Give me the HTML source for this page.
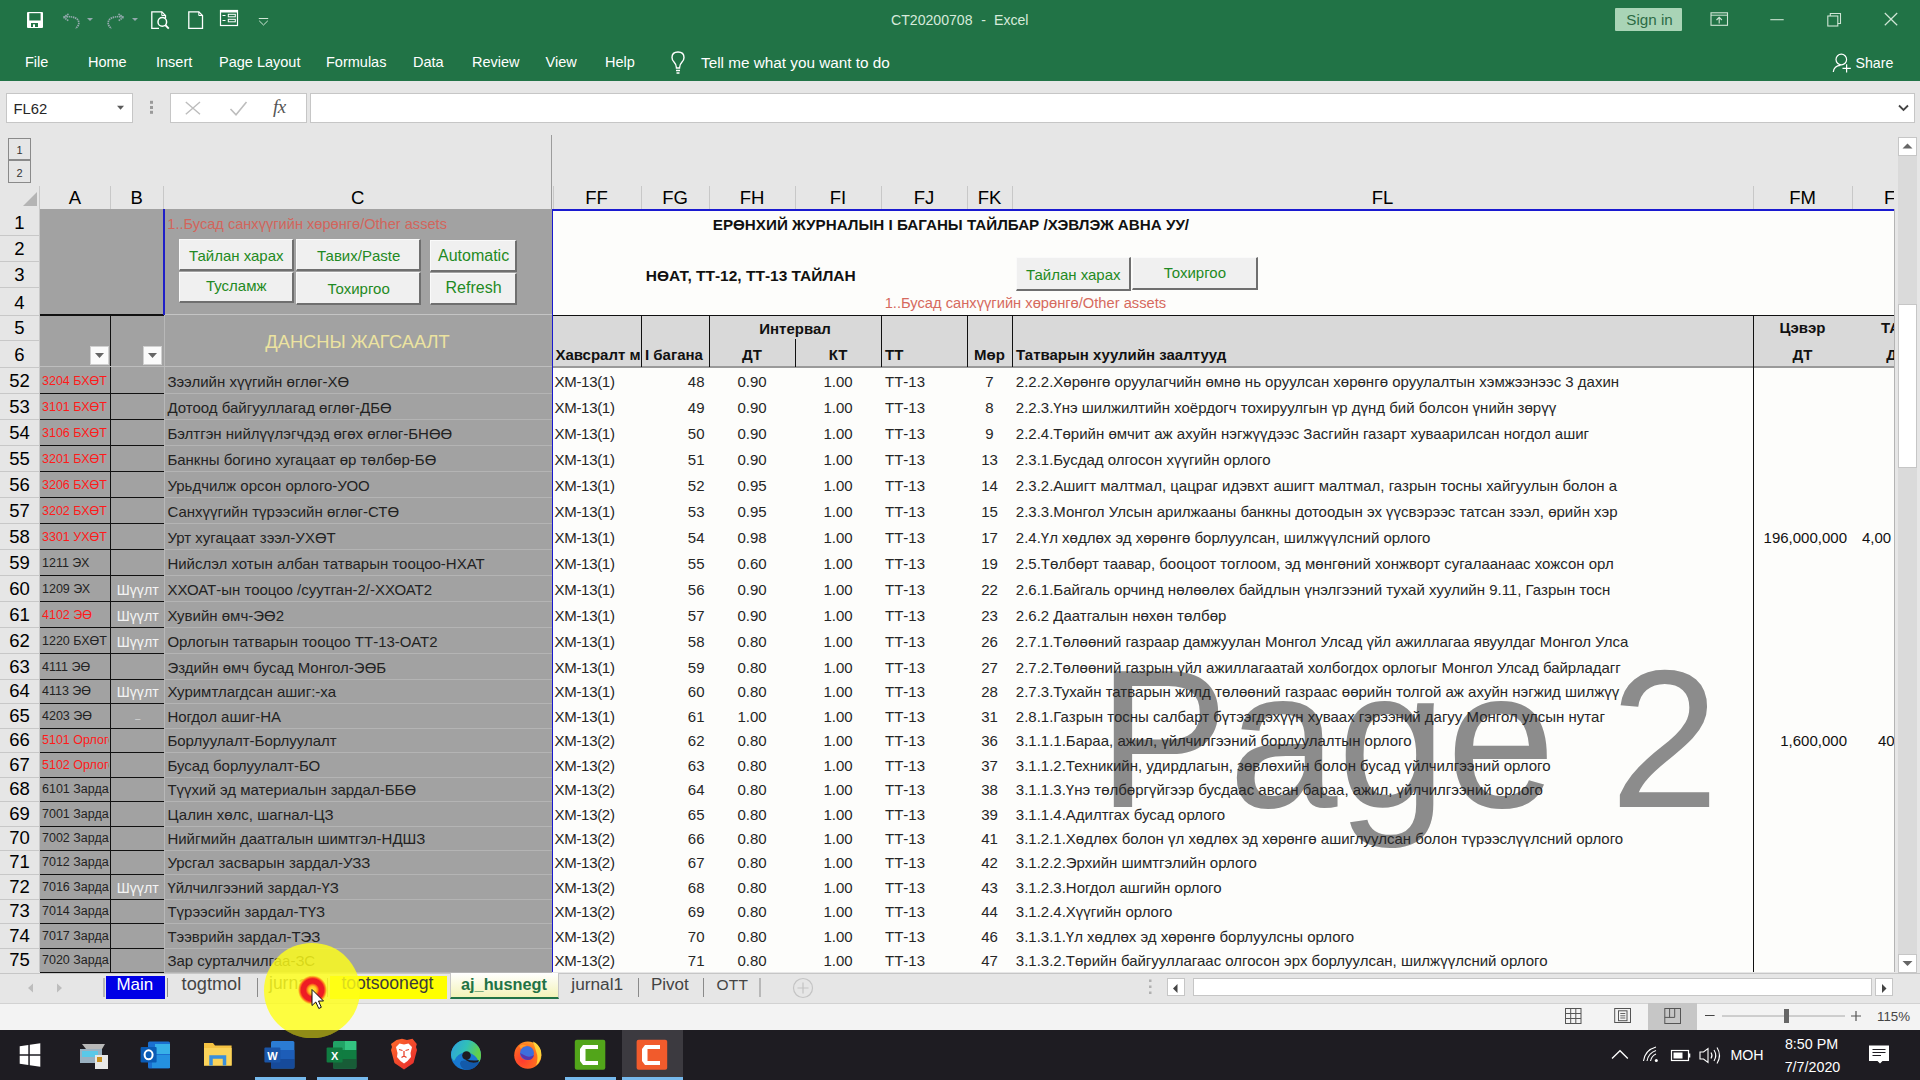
<!DOCTYPE html><html><head><meta charset="utf-8"><style>
html,body{margin:0;padding:0;width:1920px;height:1080px;overflow:hidden;background:#e6e6e6;font-family:"Liberation Sans",sans-serif;}
body{position:relative;}
div{box-sizing:border-box;}
svg{position:absolute;overflow:visible;}
</style></head><body>
<div style="position:absolute;left:0.00px;top:0.00px;width:1920.00px;height:81.00px;background:#217346"></div>
<svg style="left:0;top:0" width="300" height="40"><rect x="27" y="12" width="16" height="16" rx="1" fill="#fff"/><rect x="29.3" y="13.2" width="11.3" height="7.3" fill="#217346"/><rect x="31" y="23" width="7" height="4" fill="#217346"/><rect x="33" y="24.3" width="2" height="2.7" fill="#fff"/><path d="M63.5 17.2 L69 13.8 M63.5 17.2 L68.8 21 M64 17.2 Q73 15.5 77.5 19.5 Q81 24 75.5 28.5" stroke="#93a9ad" stroke-width="1.7" fill="none" stroke-dasharray="1.5 0.7"/><polygon points="87,18 93,18 90,21" fill="#93a9ad"/><path d="M123.5 17.2 L118 13.8 M123.5 17.2 L118.2 21 M123 17.2 Q114 15.5 109.5 19.5 Q106 24 111.5 28.5" stroke="#93a9ad" stroke-width="1.7" fill="none" stroke-dasharray="1.5 0.7"/><polygon points="132,18 138,18 135,21" fill="#93a9ad"/><path d="M159 28.3 L151.8 28.3 L151.8 11.8 L161.8 11.8 L165.5 15.5 L165.5 18" stroke="#fff" stroke-width="1.3" fill="none"/><path d="M161.8 11.8 L161.8 15.5 L165.5 15.5" stroke="#fff" stroke-width="1" fill="none"/><circle cx="162.3" cy="21.9" r="4.3" stroke="#fff" stroke-width="1.5" fill="none"/><path d="M165.3 25 L168.8 28.6" stroke="#fff" stroke-width="1.8"/><path d="M188.8 11.8 L198.8 11.8 L202.5 15.5 L202.5 28.3 L188.8 28.3 Z" stroke="#fff" stroke-width="1.3" fill="none"/><path d="M198.8 11.8 L198.8 15.5 L202.5 15.5" stroke="#fff" stroke-width="1" fill="none"/><rect x="220.5" y="10.5" width="17" height="15" stroke="#fff" stroke-width="1.2" fill="none"/><rect x="220.5" y="10.2" width="17" height="2.3" fill="#fff"/><path d="M222.5 15.5 L225.5 15.5 M222.5 20.5 L225.5 20.5" stroke="#fff" stroke-width="1"/><rect x="228.3" y="14.3" width="7" height="2.5" stroke="#fff" stroke-width="1" fill="none"/><rect x="228.3" y="19.3" width="7" height="2.5" stroke="#fff" stroke-width="1" fill="none"/><path d="M258.8 18.5 L268.2 18.5" stroke="#d0e6d6" stroke-width="1"/><path d="M259.2 20.8 L263.5 25 L267.8 20.8" stroke="#d0e6d6" stroke-width="1" fill="none"/></svg>
<div style="position:absolute;left:891.00px;top:13.06px;font-size:14.1px;line-height:14.1px;color:#d6eadb;font-weight:normal;white-space:nowrap;">CT20200708</div>
<div style="position:absolute;left:981.30px;top:13.06px;font-size:14.1px;line-height:14.1px;color:#d6eadb;font-weight:normal;white-space:nowrap;">-</div>
<div style="position:absolute;left:994.00px;top:13.06px;font-size:14.1px;line-height:14.1px;color:#d6eadb;font-weight:normal;white-space:nowrap;">Excel</div>
<div style="position:absolute;left:25.00px;top:55.23px;font-size:14.5px;line-height:14.5px;color:#ffffff;font-weight:normal;white-space:nowrap;">File</div>
<div style="position:absolute;left:88.00px;top:55.23px;font-size:14.5px;line-height:14.5px;color:#ffffff;font-weight:normal;white-space:nowrap;">Home</div>
<div style="position:absolute;left:156.00px;top:55.23px;font-size:14.5px;line-height:14.5px;color:#ffffff;font-weight:normal;white-space:nowrap;">Insert</div>
<div style="position:absolute;left:219.00px;top:55.23px;font-size:14.5px;line-height:14.5px;color:#ffffff;font-weight:normal;white-space:nowrap;">Page Layout</div>
<div style="position:absolute;left:326.00px;top:55.23px;font-size:14.5px;line-height:14.5px;color:#ffffff;font-weight:normal;white-space:nowrap;">Formulas</div>
<div style="position:absolute;left:413.00px;top:55.23px;font-size:14.5px;line-height:14.5px;color:#ffffff;font-weight:normal;white-space:nowrap;">Data</div>
<div style="position:absolute;left:472.00px;top:55.23px;font-size:14.5px;line-height:14.5px;color:#ffffff;font-weight:normal;white-space:nowrap;">Review</div>
<div style="position:absolute;left:545.50px;top:55.23px;font-size:14.5px;line-height:14.5px;color:#ffffff;font-weight:normal;white-space:nowrap;">View</div>
<div style="position:absolute;left:605.00px;top:55.23px;font-size:14.5px;line-height:14.5px;color:#ffffff;font-weight:normal;white-space:nowrap;">Help</div>
<div style="position:absolute;left:701.00px;top:54.55px;font-size:15.3px;line-height:15.3px;color:#ffffff;font-weight:normal;white-space:nowrap;">Tell me what you want to do</div>
<svg style="left:662px;top:48px" width="30" height="30"><path d="M14.5 20 Q14.5 16.5 12 14 Q10 12 10 9.5 Q10 4 16 4 Q22 4 22 9.5 Q22 12 20 14 Q17.5 16.5 17.5 20 Z" stroke="#fff" stroke-width="1.4" fill="none"/><path d="M14 22.5 L18 22.5 M14.5 25 L17.5 25" stroke="#fff" stroke-width="1.3"/></svg>
<div style="position:absolute;left:1615.00px;top:8.00px;width:67.00px;height:23.00px;background:#a9d4b6;border-radius:1px"></div>
<div style="position:absolute;left:1626.30px;top:11.83px;font-size:15.2px;line-height:15.2px;color:#2c6b45;font-weight:normal;white-space:nowrap;">Sign in</div>
<svg style="left:1700px;top:0" width="220" height="80"><rect x="11" y="12.8" width="16.5" height="12.5" stroke="#cfe5d5" stroke-width="1.1" fill="none"/><path d="M11 15.2 L27.5 15.2" stroke="#cfe5d5" stroke-width="1"/><path d="M19.2 23.5 L19.2 17.5 M16.5 20 L19.2 17.3 L21.9 20" stroke="#cfe5d5" stroke-width="1.1" fill="none"/><path d="M70.3 19.7 L83.7 19.7" stroke="#cfe5d5" stroke-width="1.1"/><rect x="127.8" y="16" width="10" height="10" stroke="#cfe5d5" stroke-width="1.1" fill="none"/><path d="M130.3 16 L130.3 13.5 L140.5 13.5 L140.5 23.5 L137.8 23.5" stroke="#cfe5d5" stroke-width="1.1" fill="none"/><path d="M184.8 13 L197.2 25.2 M197.2 13 L184.8 25.2" stroke="#cfe5d5" stroke-width="1.2"/><circle cx="141.3" cy="59.5" r="5.3" stroke="#fff" stroke-width="1.2" fill="none"/><path d="M133.3 72 Q134 65.5 140.5 65.3" stroke="#fff" stroke-width="1.2" fill="none"/><path d="M142.5 68.3 L150.8 68.3 M146.6 64.2 L146.6 72.5" stroke="#fff" stroke-width="1.2"/></svg>
<div style="position:absolute;left:1855.50px;top:56.48px;font-size:14.2px;line-height:14.2px;color:#ffffff;font-weight:normal;white-space:nowrap;">Share</div>
<div style="position:absolute;left:0.00px;top:81.00px;width:1920.00px;height:54.00px;background:#e6e6e6"></div>
<div style="position:absolute;left:6.00px;top:93.00px;width:127.00px;height:30.00px;background:#fff;border:1px solid #c6c6c6"></div>
<div style="position:absolute;left:13.50px;top:101.97px;font-size:14.8px;line-height:14.8px;color:#262626;font-weight:normal;white-space:nowrap;">FL62</div>
<div style="position:absolute;left:170.00px;top:93.00px;width:136.80px;height:29.50px;background:#fff;border:1px solid #c6c6c6"></div>
<svg style="left:0;top:85px" width="320" height="45"><polygon points="117,20.8 124,20.8 120.5,24.8" fill="#5a5a5a"/><rect x="150" y="15.8" width="3" height="3" fill="#9a9a9a"/><rect x="150" y="21" width="3" height="3" fill="#9a9a9a"/><rect x="150" y="25.8" width="3" height="3" fill="#9a9a9a"/><path d="M185.8 17 L200 29.3 M200 17 L185.8 29.3" stroke="#bdbdbd" stroke-width="1.4"/><path d="M230.5 24 L236 29.8 L246.5 17" stroke="#bdbdbd" stroke-width="1.6" fill="none"/></svg>
<div style="position:absolute;left:273.00px;top:96.92px;font-size:19px;line-height:19px;color:#555;font-weight:normal;white-space:nowrap;font-family:'Liberation Serif',serif;font-style:italic;letter-spacing:-0.5px;">fx</div>
<div style="position:absolute;left:310.00px;top:93.00px;width:1605.00px;height:30.00px;background:#fff;border:1px solid #c6c6c6"></div>
<svg style="left:1895px;top:100px" width="20" height="16"><path d="M4 5.5 L8.5 10 L13 5.5" stroke="#444" stroke-width="1.8" fill="none"/></svg>
<div style="position:absolute;left:8.00px;top:137.50px;width:23.00px;height:22.00px;border:1px solid #8a8a8a;background:#e6e6e6"></div>
<div style="position:absolute;left:8.00px;top:160.00px;width:23.00px;height:23.00px;border:1px solid #8a8a8a;background:#e6e6e6"></div>
<div style="position:absolute;left:-580.50px;width:1200px;text-align:center;top:144.69px;font-size:11px;line-height:11px;color:#333;font-weight:normal;white-space:nowrap;">1</div>
<div style="position:absolute;left:-580.50px;width:1200px;text-align:center;top:167.69px;font-size:11px;line-height:11px;color:#333;font-weight:normal;white-space:nowrap;">2</div>
<div style="position:absolute;left:0.00px;top:186.00px;width:1894.30px;height:23.40px;background:#e6e6e6"></div>
<div style="position:absolute;left:-525.00px;width:1200px;text-align:center;top:189.34px;font-size:18.5px;line-height:18.5px;color:#000;font-weight:normal;white-space:nowrap;">A</div>
<div style="position:absolute;left:-463.25px;width:1200px;text-align:center;top:189.34px;font-size:18.5px;line-height:18.5px;color:#000;font-weight:normal;white-space:nowrap;">B</div>
<div style="position:absolute;left:-242.25px;width:1200px;text-align:center;top:189.34px;font-size:18.5px;line-height:18.5px;color:#000;font-weight:normal;white-space:nowrap;">C</div>
<div style="position:absolute;left:-3.50px;width:1200px;text-align:center;top:189.34px;font-size:18.5px;line-height:18.5px;color:#000;font-weight:normal;white-space:nowrap;">FF</div>
<div style="position:absolute;left:75.00px;width:1200px;text-align:center;top:189.34px;font-size:18.5px;line-height:18.5px;color:#000;font-weight:normal;white-space:nowrap;">FG</div>
<div style="position:absolute;left:152.00px;width:1200px;text-align:center;top:189.34px;font-size:18.5px;line-height:18.5px;color:#000;font-weight:normal;white-space:nowrap;">FH</div>
<div style="position:absolute;left:238.00px;width:1200px;text-align:center;top:189.34px;font-size:18.5px;line-height:18.5px;color:#000;font-weight:normal;white-space:nowrap;">FI</div>
<div style="position:absolute;left:324.00px;width:1200px;text-align:center;top:189.34px;font-size:18.5px;line-height:18.5px;color:#000;font-weight:normal;white-space:nowrap;">FJ</div>
<div style="position:absolute;left:389.50px;width:1200px;text-align:center;top:189.34px;font-size:18.5px;line-height:18.5px;color:#000;font-weight:normal;white-space:nowrap;">FK</div>
<div style="position:absolute;left:782.50px;width:1200px;text-align:center;top:189.34px;font-size:18.5px;line-height:18.5px;color:#000;font-weight:normal;white-space:nowrap;">FL</div>
<div style="position:absolute;left:1202.50px;width:1200px;text-align:center;top:189.34px;font-size:18.5px;line-height:18.5px;color:#000;font-weight:normal;white-space:nowrap;">FM</div>
<div style="position:absolute;left:1852.00px;top:186.00px;width:42.00px;height:23.40px;overflow:hidden;">
<div style="position:absolute;left:32.00px;top:3.34px;font-size:18.5px;line-height:18.5px;color:#000;font-weight:normal;white-space:nowrap;">FN</div>
</div>
<div style="position:absolute;left:109.50px;top:186.00px;width:1.00px;height:23.40px;background:#c8c8c8"></div>
<div style="position:absolute;left:163.00px;top:186.00px;width:1.00px;height:23.40px;background:#c8c8c8"></div>
<div style="position:absolute;left:640.50px;top:186.00px;width:1.00px;height:23.40px;background:#c8c8c8"></div>
<div style="position:absolute;left:708.50px;top:186.00px;width:1.00px;height:23.40px;background:#c8c8c8"></div>
<div style="position:absolute;left:794.50px;top:186.00px;width:1.00px;height:23.40px;background:#c8c8c8"></div>
<div style="position:absolute;left:880.50px;top:186.00px;width:1.00px;height:23.40px;background:#c8c8c8"></div>
<div style="position:absolute;left:966.50px;top:186.00px;width:1.00px;height:23.40px;background:#c8c8c8"></div>
<div style="position:absolute;left:1011.50px;top:186.00px;width:1.00px;height:23.40px;background:#c8c8c8"></div>
<div style="position:absolute;left:1752.50px;top:186.00px;width:1.00px;height:23.40px;background:#c8c8c8"></div>
<div style="position:absolute;left:1851.50px;top:186.00px;width:1.00px;height:23.40px;background:#c8c8c8"></div>
<div style="position:absolute;left:551.20px;top:135.00px;width:1.20px;height:74.50px;background:#9c9c9c"></div>
<div style="position:absolute;left:553.00px;top:186.00px;width:1.00px;height:23.00px;background:#c8c8c8"></div>
<svg style="left:20px;top:192px" width="18" height="15"><polygon points="17,0 17,14 3,14" fill="#b4b4b4"/></svg>
<div style="position:absolute;left:0.00px;top:209.00px;width:39.50px;height:763.00px;background:#e6e6e6"></div>
<div style="position:absolute;left:0.00px;top:235.00px;width:39.50px;height:1.00px;background:#c8c8c8"></div>
<div style="position:absolute;left:-580.50px;width:1200px;text-align:center;top:214.04px;font-size:18.5px;line-height:18.5px;color:#000;font-weight:normal;white-space:nowrap;">1</div>
<div style="position:absolute;left:0.00px;top:261.00px;width:39.50px;height:1.00px;background:#c8c8c8"></div>
<div style="position:absolute;left:-580.50px;width:1200px;text-align:center;top:240.04px;font-size:18.5px;line-height:18.5px;color:#000;font-weight:normal;white-space:nowrap;">2</div>
<div style="position:absolute;left:0.00px;top:287.00px;width:39.50px;height:1.00px;background:#c8c8c8"></div>
<div style="position:absolute;left:-580.50px;width:1200px;text-align:center;top:266.04px;font-size:18.5px;line-height:18.5px;color:#000;font-weight:normal;white-space:nowrap;">3</div>
<div style="position:absolute;left:0.00px;top:315.00px;width:39.50px;height:1.00px;background:#c8c8c8"></div>
<div style="position:absolute;left:-580.50px;width:1200px;text-align:center;top:294.04px;font-size:18.5px;line-height:18.5px;color:#000;font-weight:normal;white-space:nowrap;">4</div>
<div style="position:absolute;left:0.00px;top:340.00px;width:39.50px;height:1.00px;background:#c8c8c8"></div>
<div style="position:absolute;left:-580.50px;width:1200px;text-align:center;top:319.04px;font-size:18.5px;line-height:18.5px;color:#000;font-weight:normal;white-space:nowrap;">5</div>
<div style="position:absolute;left:0.00px;top:367.00px;width:39.50px;height:1.00px;background:#c8c8c8"></div>
<div style="position:absolute;left:-580.50px;width:1200px;text-align:center;top:346.04px;font-size:18.5px;line-height:18.5px;color:#000;font-weight:normal;white-space:nowrap;">6</div>
<div style="position:absolute;left:0.00px;top:393.00px;width:39.50px;height:1.00px;background:#c8c8c8"></div>
<div style="position:absolute;left:-580.50px;width:1200px;text-align:center;top:372.04px;font-size:18.5px;line-height:18.5px;color:#000;font-weight:normal;white-space:nowrap;">52</div>
<div style="position:absolute;left:0.00px;top:419.00px;width:39.50px;height:1.00px;background:#c8c8c8"></div>
<div style="position:absolute;left:-580.50px;width:1200px;text-align:center;top:398.04px;font-size:18.5px;line-height:18.5px;color:#000;font-weight:normal;white-space:nowrap;">53</div>
<div style="position:absolute;left:0.00px;top:445.00px;width:39.50px;height:1.00px;background:#c8c8c8"></div>
<div style="position:absolute;left:-580.50px;width:1200px;text-align:center;top:424.04px;font-size:18.5px;line-height:18.5px;color:#000;font-weight:normal;white-space:nowrap;">54</div>
<div style="position:absolute;left:0.00px;top:471.00px;width:39.50px;height:1.00px;background:#c8c8c8"></div>
<div style="position:absolute;left:-580.50px;width:1200px;text-align:center;top:450.04px;font-size:18.5px;line-height:18.5px;color:#000;font-weight:normal;white-space:nowrap;">55</div>
<div style="position:absolute;left:0.00px;top:497.00px;width:39.50px;height:1.00px;background:#c8c8c8"></div>
<div style="position:absolute;left:-580.50px;width:1200px;text-align:center;top:476.04px;font-size:18.5px;line-height:18.5px;color:#000;font-weight:normal;white-space:nowrap;">56</div>
<div style="position:absolute;left:0.00px;top:523.00px;width:39.50px;height:1.00px;background:#c8c8c8"></div>
<div style="position:absolute;left:-580.50px;width:1200px;text-align:center;top:502.04px;font-size:18.5px;line-height:18.5px;color:#000;font-weight:normal;white-space:nowrap;">57</div>
<div style="position:absolute;left:0.00px;top:549.00px;width:39.50px;height:1.00px;background:#c8c8c8"></div>
<div style="position:absolute;left:-580.50px;width:1200px;text-align:center;top:528.04px;font-size:18.5px;line-height:18.5px;color:#000;font-weight:normal;white-space:nowrap;">58</div>
<div style="position:absolute;left:0.00px;top:575.00px;width:39.50px;height:1.00px;background:#c8c8c8"></div>
<div style="position:absolute;left:-580.50px;width:1200px;text-align:center;top:554.04px;font-size:18.5px;line-height:18.5px;color:#000;font-weight:normal;white-space:nowrap;">59</div>
<div style="position:absolute;left:0.00px;top:601.00px;width:39.50px;height:1.00px;background:#c8c8c8"></div>
<div style="position:absolute;left:-580.50px;width:1200px;text-align:center;top:580.04px;font-size:18.5px;line-height:18.5px;color:#000;font-weight:normal;white-space:nowrap;">60</div>
<div style="position:absolute;left:0.00px;top:627.00px;width:39.50px;height:1.00px;background:#c8c8c8"></div>
<div style="position:absolute;left:-580.50px;width:1200px;text-align:center;top:606.04px;font-size:18.5px;line-height:18.5px;color:#000;font-weight:normal;white-space:nowrap;">61</div>
<div style="position:absolute;left:0.00px;top:653.00px;width:39.50px;height:1.00px;background:#c8c8c8"></div>
<div style="position:absolute;left:-580.50px;width:1200px;text-align:center;top:632.04px;font-size:18.5px;line-height:18.5px;color:#000;font-weight:normal;white-space:nowrap;">62</div>
<div style="position:absolute;left:0.00px;top:679.00px;width:39.50px;height:1.00px;background:#c8c8c8"></div>
<div style="position:absolute;left:-580.50px;width:1200px;text-align:center;top:658.04px;font-size:18.5px;line-height:18.5px;color:#000;font-weight:normal;white-space:nowrap;">63</div>
<div style="position:absolute;left:0.00px;top:703.00px;width:39.50px;height:1.00px;background:#c8c8c8"></div>
<div style="position:absolute;left:-580.50px;width:1200px;text-align:center;top:682.04px;font-size:18.5px;line-height:18.5px;color:#000;font-weight:normal;white-space:nowrap;">64</div>
<div style="position:absolute;left:0.00px;top:728.00px;width:39.50px;height:1.00px;background:#c8c8c8"></div>
<div style="position:absolute;left:-580.50px;width:1200px;text-align:center;top:707.04px;font-size:18.5px;line-height:18.5px;color:#000;font-weight:normal;white-space:nowrap;">65</div>
<div style="position:absolute;left:0.00px;top:752.00px;width:39.50px;height:1.00px;background:#c8c8c8"></div>
<div style="position:absolute;left:-580.50px;width:1200px;text-align:center;top:731.04px;font-size:18.5px;line-height:18.5px;color:#000;font-weight:normal;white-space:nowrap;">66</div>
<div style="position:absolute;left:0.00px;top:777.00px;width:39.50px;height:1.00px;background:#c8c8c8"></div>
<div style="position:absolute;left:-580.50px;width:1200px;text-align:center;top:756.04px;font-size:18.5px;line-height:18.5px;color:#000;font-weight:normal;white-space:nowrap;">67</div>
<div style="position:absolute;left:0.00px;top:801.00px;width:39.50px;height:1.00px;background:#c8c8c8"></div>
<div style="position:absolute;left:-580.50px;width:1200px;text-align:center;top:780.04px;font-size:18.5px;line-height:18.5px;color:#000;font-weight:normal;white-space:nowrap;">68</div>
<div style="position:absolute;left:0.00px;top:826.00px;width:39.50px;height:1.00px;background:#c8c8c8"></div>
<div style="position:absolute;left:-580.50px;width:1200px;text-align:center;top:805.04px;font-size:18.5px;line-height:18.5px;color:#000;font-weight:normal;white-space:nowrap;">69</div>
<div style="position:absolute;left:0.00px;top:850.00px;width:39.50px;height:1.00px;background:#c8c8c8"></div>
<div style="position:absolute;left:-580.50px;width:1200px;text-align:center;top:829.04px;font-size:18.5px;line-height:18.5px;color:#000;font-weight:normal;white-space:nowrap;">70</div>
<div style="position:absolute;left:0.00px;top:874.00px;width:39.50px;height:1.00px;background:#c8c8c8"></div>
<div style="position:absolute;left:-580.50px;width:1200px;text-align:center;top:853.04px;font-size:18.5px;line-height:18.5px;color:#000;font-weight:normal;white-space:nowrap;">71</div>
<div style="position:absolute;left:0.00px;top:899.00px;width:39.50px;height:1.00px;background:#c8c8c8"></div>
<div style="position:absolute;left:-580.50px;width:1200px;text-align:center;top:878.04px;font-size:18.5px;line-height:18.5px;color:#000;font-weight:normal;white-space:nowrap;">72</div>
<div style="position:absolute;left:0.00px;top:923.00px;width:39.50px;height:1.00px;background:#c8c8c8"></div>
<div style="position:absolute;left:-580.50px;width:1200px;text-align:center;top:902.04px;font-size:18.5px;line-height:18.5px;color:#000;font-weight:normal;white-space:nowrap;">73</div>
<div style="position:absolute;left:0.00px;top:948.00px;width:39.50px;height:1.00px;background:#c8c8c8"></div>
<div style="position:absolute;left:-580.50px;width:1200px;text-align:center;top:927.04px;font-size:18.5px;line-height:18.5px;color:#000;font-weight:normal;white-space:nowrap;">74</div>
<div style="position:absolute;left:-580.50px;width:1200px;text-align:center;top:951.04px;font-size:18.5px;line-height:18.5px;color:#000;font-weight:normal;white-space:nowrap;">75</div>
<div style="position:absolute;left:39.00px;top:186.00px;width:1.00px;height:786.30px;background:#c8c8c8"></div>
<div style="position:absolute;left:40.00px;top:209.00px;width:512.00px;height:763.00px;background:#a2a2a2"></div>
<div style="position:absolute;left:552.00px;top:209.00px;width:1342.00px;height:763.00px;background:#fdfdfb"></div>
<div style="position:absolute;left:552.00px;top:315.00px;width:1342.00px;height:52.00px;background:#d9d9d9"></div>
<div style="position:absolute;left:552.00px;top:209.00px;width:1342.00px;height:763.00px;overflow:hidden;">
<div style="position:absolute;left:545.80px;top:432.89px;font-size:196px;line-height:196px;color:#8c8c8c;font-weight:normal;white-space:nowrap;">Page 2</div>
</div>
<div style="position:absolute;left:40.00px;top:314.00px;width:123.50px;height:1.50px;background:#111"></div>
<div style="position:absolute;left:163.50px;top:314.00px;width:388.50px;height:1.00px;background:#c4c4c4"></div>
<div style="position:absolute;left:109.50px;top:315.00px;width:1.20px;height:657.00px;background:#111"></div>
<div style="position:absolute;left:163.50px;top:315.00px;width:1.00px;height:657.00px;background:#b8b8b8"></div>
<div style="position:absolute;left:163.00px;top:209.00px;width:1.50px;height:106.00px;background:#2020c8"></div>
<div style="position:absolute;left:40.00px;top:366.00px;width:512.00px;height:1.00px;background:#bdbdbd"></div>
<div style="position:absolute;left:40.00px;top:393.00px;width:123.50px;height:1.00px;background:#111"></div>
<div style="position:absolute;left:163.50px;top:393.00px;width:388.50px;height:1.00px;background:#b4b4b4"></div>
<div style="position:absolute;left:40.00px;top:419.00px;width:123.50px;height:1.00px;background:#111"></div>
<div style="position:absolute;left:163.50px;top:419.00px;width:388.50px;height:1.00px;background:#b4b4b4"></div>
<div style="position:absolute;left:40.00px;top:445.00px;width:123.50px;height:1.00px;background:#111"></div>
<div style="position:absolute;left:163.50px;top:445.00px;width:388.50px;height:1.00px;background:#b4b4b4"></div>
<div style="position:absolute;left:40.00px;top:471.00px;width:123.50px;height:1.00px;background:#111"></div>
<div style="position:absolute;left:163.50px;top:471.00px;width:388.50px;height:1.00px;background:#b4b4b4"></div>
<div style="position:absolute;left:40.00px;top:497.00px;width:123.50px;height:1.00px;background:#111"></div>
<div style="position:absolute;left:163.50px;top:497.00px;width:388.50px;height:1.00px;background:#b4b4b4"></div>
<div style="position:absolute;left:40.00px;top:523.00px;width:123.50px;height:1.00px;background:#111"></div>
<div style="position:absolute;left:163.50px;top:523.00px;width:388.50px;height:1.00px;background:#b4b4b4"></div>
<div style="position:absolute;left:40.00px;top:549.00px;width:123.50px;height:1.00px;background:#111"></div>
<div style="position:absolute;left:163.50px;top:549.00px;width:388.50px;height:1.00px;background:#b4b4b4"></div>
<div style="position:absolute;left:40.00px;top:575.00px;width:123.50px;height:1.00px;background:#111"></div>
<div style="position:absolute;left:163.50px;top:575.00px;width:388.50px;height:1.00px;background:#b4b4b4"></div>
<div style="position:absolute;left:40.00px;top:601.00px;width:123.50px;height:1.00px;background:#111"></div>
<div style="position:absolute;left:163.50px;top:601.00px;width:388.50px;height:1.00px;background:#b4b4b4"></div>
<div style="position:absolute;left:40.00px;top:627.00px;width:123.50px;height:1.00px;background:#111"></div>
<div style="position:absolute;left:163.50px;top:627.00px;width:388.50px;height:1.00px;background:#b4b4b4"></div>
<div style="position:absolute;left:40.00px;top:653.00px;width:123.50px;height:1.00px;background:#111"></div>
<div style="position:absolute;left:163.50px;top:653.00px;width:388.50px;height:1.00px;background:#b4b4b4"></div>
<div style="position:absolute;left:40.00px;top:679.00px;width:123.50px;height:1.00px;background:#111"></div>
<div style="position:absolute;left:163.50px;top:679.00px;width:388.50px;height:1.00px;background:#b4b4b4"></div>
<div style="position:absolute;left:40.00px;top:703.00px;width:123.50px;height:1.00px;background:#111"></div>
<div style="position:absolute;left:163.50px;top:703.00px;width:388.50px;height:1.00px;background:#b4b4b4"></div>
<div style="position:absolute;left:40.00px;top:728.00px;width:123.50px;height:1.00px;background:#111"></div>
<div style="position:absolute;left:163.50px;top:728.00px;width:388.50px;height:1.00px;background:#b4b4b4"></div>
<div style="position:absolute;left:40.00px;top:752.00px;width:123.50px;height:1.00px;background:#111"></div>
<div style="position:absolute;left:163.50px;top:752.00px;width:388.50px;height:1.00px;background:#b4b4b4"></div>
<div style="position:absolute;left:40.00px;top:777.00px;width:123.50px;height:1.00px;background:#111"></div>
<div style="position:absolute;left:163.50px;top:777.00px;width:388.50px;height:1.00px;background:#b4b4b4"></div>
<div style="position:absolute;left:40.00px;top:801.00px;width:123.50px;height:1.00px;background:#111"></div>
<div style="position:absolute;left:163.50px;top:801.00px;width:388.50px;height:1.00px;background:#b4b4b4"></div>
<div style="position:absolute;left:40.00px;top:826.00px;width:123.50px;height:1.00px;background:#111"></div>
<div style="position:absolute;left:163.50px;top:826.00px;width:388.50px;height:1.00px;background:#b4b4b4"></div>
<div style="position:absolute;left:40.00px;top:850.00px;width:123.50px;height:1.00px;background:#111"></div>
<div style="position:absolute;left:163.50px;top:850.00px;width:388.50px;height:1.00px;background:#b4b4b4"></div>
<div style="position:absolute;left:40.00px;top:874.00px;width:123.50px;height:1.00px;background:#111"></div>
<div style="position:absolute;left:163.50px;top:874.00px;width:388.50px;height:1.00px;background:#b4b4b4"></div>
<div style="position:absolute;left:40.00px;top:899.00px;width:123.50px;height:1.00px;background:#111"></div>
<div style="position:absolute;left:163.50px;top:899.00px;width:388.50px;height:1.00px;background:#b4b4b4"></div>
<div style="position:absolute;left:40.00px;top:923.00px;width:123.50px;height:1.00px;background:#111"></div>
<div style="position:absolute;left:163.50px;top:923.00px;width:388.50px;height:1.00px;background:#b4b4b4"></div>
<div style="position:absolute;left:40.00px;top:948.00px;width:123.50px;height:1.00px;background:#111"></div>
<div style="position:absolute;left:163.50px;top:948.00px;width:388.50px;height:1.00px;background:#b4b4b4"></div>
<div style="position:absolute;left:40.00px;top:972.00px;width:123.50px;height:1.00px;background:#111"></div>
<div style="position:absolute;left:163.50px;top:972.00px;width:388.50px;height:1.00px;background:#b4b4b4"></div>
<div style="position:absolute;left:89.90px;top:345.80px;width:19.30px;height:19.30px;background:#fbfbfb;border:1px solid #d0d0d0"></div>
<svg style="left:94.9px;top:353px" width="10" height="6"><polygon points="0,0 9,0 4.5,5" fill="#666"/></svg>
<div style="position:absolute;left:143.00px;top:345.80px;width:19.30px;height:19.30px;background:#fbfbfb;border:1px solid #d0d0d0"></div>
<svg style="left:148.0px;top:353px" width="10" height="6"><polygon points="0,0 9,0 4.5,5" fill="#666"/></svg>
<div style="position:absolute;left:167.30px;top:217.24px;font-size:14.6px;line-height:14.6px;color:#d2655c;font-weight:normal;white-space:nowrap;">1..Бусад санхүүгийн хөрөнгө/Other assets</div>
<div style="position:absolute;left:178.8px;top:239.0px;width:115.0px;height:32.2px;background:#f0f0f0;border-right:2px solid #6f6f6f;border-bottom:2px solid #6f6f6f;border-top:1px solid #fafafa;border-left:1px solid #fafafa"></div>
<div style="position:absolute;left:-363.75px;width:1200px;text-align:center;top:247.73px;font-size:15px;line-height:15px;color:#1f8a23;font-weight:normal;white-space:nowrap;">Тайлан харах</div>
<div style="position:absolute;left:178.8px;top:271.7px;width:115.0px;height:31.2px;background:#f0f0f0;border-right:2px solid #6f6f6f;border-bottom:2px solid #6f6f6f;border-top:1px solid #fafafa;border-left:1px solid #fafafa"></div>
<div style="position:absolute;left:-363.75px;width:1200px;text-align:center;top:277.90px;font-size:15px;line-height:15px;color:#1f8a23;font-weight:normal;white-space:nowrap;">Тусламж</div>
<div style="position:absolute;left:295.8px;top:239.0px;width:125.7px;height:32.2px;background:#f0f0f0;border-right:2px solid #6f6f6f;border-bottom:2px solid #6f6f6f;border-top:1px solid #fafafa;border-left:1px solid #fafafa"></div>
<div style="position:absolute;left:-241.35px;width:1200px;text-align:center;top:247.73px;font-size:15px;line-height:15px;color:#1f8a23;font-weight:normal;white-space:nowrap;">Тавих/Paste</div>
<div style="position:absolute;left:295.8px;top:272.0px;width:125.7px;height:32.6px;background:#f0f0f0;border-right:2px solid #6f6f6f;border-bottom:2px solid #6f6f6f;border-top:1px solid #fafafa;border-left:1px solid #fafafa"></div>
<div style="position:absolute;left:-241.35px;width:1200px;text-align:center;top:280.90px;font-size:15px;line-height:15px;color:#1f8a23;font-weight:normal;white-space:nowrap;">Тохиргоо</div>
<div style="position:absolute;left:429.8px;top:240.0px;width:87.5px;height:31.7px;background:#f0f0f0;border-right:2px solid #6f6f6f;border-bottom:2px solid #6f6f6f;border-top:1px solid #fafafa;border-left:1px solid #fafafa"></div>
<div style="position:absolute;left:-126.45px;width:1200px;text-align:center;top:247.61px;font-size:16px;line-height:16px;color:#1f8a23;font-weight:normal;white-space:nowrap;">Automatic</div>
<div style="position:absolute;left:429.8px;top:272.7px;width:87.5px;height:31.9px;background:#f0f0f0;border-right:2px solid #6f6f6f;border-bottom:2px solid #6f6f6f;border-top:1px solid #fafafa;border-left:1px solid #fafafa"></div>
<div style="position:absolute;left:-126.45px;width:1200px;text-align:center;top:280.41px;font-size:16px;line-height:16px;color:#1f8a23;font-weight:normal;white-space:nowrap;">Refresh</div>
<div style="position:absolute;left:-242.50px;width:1200px;text-align:center;top:333.26px;font-size:18.3px;line-height:18.3px;color:#ece3a0;font-weight:normal;white-space:nowrap;">ДАНСНЫ ЖАГСААЛТ</div>
<div style="position:absolute;left:712.80px;top:216.88px;font-size:15.2px;line-height:15.2px;color:#111;font-weight:bold;white-space:nowrap;">ЕРӨНХИЙ ЖУРНАЛЫН I БАГАНЫ ТАЙЛБАР /ХЭВЛЭЖ АВНА УУ/</div>
<div style="position:absolute;left:645.80px;top:268.18px;font-size:15.5px;line-height:15.5px;color:#111;font-weight:bold;white-space:nowrap;">НӨАТ, ТТ-12, ТТ-13 ТАЙЛАН</div>
<div style="position:absolute;left:1016.0px;top:257.2px;width:114.5px;height:33.8px;background:#f0f0f0;border-right:2px solid #6f6f6f;border-bottom:2px solid #6f6f6f;border-top:1px solid #fafafa;border-left:1px solid #fafafa"></div>
<div style="position:absolute;left:473.25px;width:1200px;text-align:center;top:266.73px;font-size:15px;line-height:15px;color:#1f8a23;font-weight:normal;white-space:nowrap;">Тайлан харах</div>
<div style="position:absolute;left:1132.2px;top:257.0px;width:125.5px;height:33.0px;background:#f0f0f0;border-right:2px solid #6f6f6f;border-bottom:2px solid #6f6f6f;border-top:1px solid #fafafa;border-left:1px solid #fafafa"></div>
<div style="position:absolute;left:594.95px;width:1200px;text-align:center;top:265.10px;font-size:15px;line-height:15px;color:#1f8a23;font-weight:normal;white-space:nowrap;">Тохиргоо</div>
<div style="position:absolute;left:884.70px;top:295.56px;font-size:14.7px;line-height:14.7px;color:#d66a5e;font-weight:normal;white-space:nowrap;">1..Бусад санхүүгийн хөрөнгө/Other assets</div>
<div style="position:absolute;left:552.00px;top:314.50px;width:1342.00px;height:1.50px;background:#111"></div>
<div style="position:absolute;left:552.00px;top:366.00px;width:1342.00px;height:1.50px;background:#9a9a9a"></div>
<div style="position:absolute;left:640.50px;top:315.00px;width:1.30px;height:52.00px;background:#111"></div>
<div style="position:absolute;left:708.50px;top:315.00px;width:1.30px;height:52.00px;background:#111"></div>
<div style="position:absolute;left:880.50px;top:315.00px;width:1.30px;height:52.00px;background:#111"></div>
<div style="position:absolute;left:966.50px;top:315.00px;width:1.30px;height:52.00px;background:#111"></div>
<div style="position:absolute;left:1011.50px;top:315.00px;width:1.30px;height:52.00px;background:#111"></div>
<div style="position:absolute;left:1752.50px;top:315.00px;width:1.30px;height:52.00px;background:#111"></div>
<div style="position:absolute;left:794.50px;top:339.00px;width:1.30px;height:28.00px;background:#111"></div>
<div style="position:absolute;left:195.00px;width:1200px;text-align:center;top:320.60px;font-size:15px;line-height:15px;color:#111;font-weight:bold;white-space:nowrap;">Интервал</div>
<div style="position:absolute;left:1202.50px;width:1200px;text-align:center;top:320.00px;font-size:15px;line-height:15px;color:#111;font-weight:bold;white-space:nowrap;">Цэвэр</div>
<div style="position:absolute;left:552.00px;top:315.00px;width:1342.00px;height:52.00px;overflow:hidden;">
</div>
<div style="position:absolute;left:552.00px;top:315.00px;width:88.00px;height:52.00px;overflow:hidden;">
<div style="position:absolute;left:3.40px;top:32.30px;font-size:15px;line-height:15px;color:#111;font-weight:bold;white-space:nowrap;">Хавсралт м</div>
</div>
<div style="position:absolute;left:645.00px;top:347.30px;font-size:15px;line-height:15px;color:#111;font-weight:bold;white-space:nowrap;">I багана</div>
<div style="position:absolute;left:152.00px;width:1200px;text-align:center;top:347.30px;font-size:15px;line-height:15px;color:#111;font-weight:bold;white-space:nowrap;">ДТ</div>
<div style="position:absolute;left:238.00px;width:1200px;text-align:center;top:347.30px;font-size:15px;line-height:15px;color:#111;font-weight:bold;white-space:nowrap;">КТ</div>
<div style="position:absolute;left:885.00px;top:347.30px;font-size:15px;line-height:15px;color:#111;font-weight:bold;white-space:nowrap;">ТТ</div>
<div style="position:absolute;left:389.50px;width:1200px;text-align:center;top:347.30px;font-size:15px;line-height:15px;color:#111;font-weight:bold;white-space:nowrap;">Мөр</div>
<div style="position:absolute;left:1016.00px;top:347.30px;font-size:15px;line-height:15px;color:#111;font-weight:bold;white-space:nowrap;">Татварын хуулийн заалтууд</div>
<div style="position:absolute;left:1202.50px;width:1200px;text-align:center;top:346.90px;font-size:15px;line-height:15px;color:#111;font-weight:bold;white-space:nowrap;">ДТ</div>
<div style="position:absolute;left:1852.00px;top:315.00px;width:42.00px;height:52.00px;overflow:hidden;">
<div style="position:absolute;left:29.00px;top:5.00px;font-size:15px;line-height:15px;color:#111;font-weight:bold;white-space:nowrap;">ТА</div>
<div style="position:absolute;left:34.20px;top:31.90px;font-size:15px;line-height:15px;color:#111;font-weight:bold;white-space:nowrap;">ДТ</div>
</div>
<div style="position:absolute;left:1752.50px;top:367.00px;width:1.30px;height:605.00px;background:#111"></div>
<div style="position:absolute;left:40.00px;top:367.00px;width:69.00px;height:26.00px;overflow:hidden;">
<div style="position:absolute;left:2.00px;top:8.12px;font-size:12.5px;line-height:12.5px;color:#ff1a1a;font-weight:normal;white-space:nowrap;">3204 БХӨТ</div>
</div>
<div style="position:absolute;left:167.40px;top:373.50px;font-size:15px;line-height:15px;color:#222;font-weight:normal;white-space:nowrap;">Зээлийн хүүгийн өглөг-ХӨ</div>
<div style="position:absolute;left:554.50px;top:373.50px;font-size:15px;line-height:15px;color:#262626;font-weight:normal;white-space:nowrap;letter-spacing:-0.3px;">ХМ-13(1)</div>
<div style="position:absolute;left:-495.50px;width:1200px;text-align:right;top:373.50px;font-size:15px;line-height:15px;color:#262626;font-weight:normal;white-space:nowrap;">48</div>
<div style="position:absolute;left:152.00px;width:1200px;text-align:center;top:373.50px;font-size:15px;line-height:15px;color:#262626;font-weight:normal;white-space:nowrap;">0.90</div>
<div style="position:absolute;left:238.00px;width:1200px;text-align:center;top:373.50px;font-size:15px;line-height:15px;color:#262626;font-weight:normal;white-space:nowrap;">1.00</div>
<div style="position:absolute;left:885.00px;top:373.50px;font-size:15px;line-height:15px;color:#262626;font-weight:normal;white-space:nowrap;">ТТ-13</div>
<div style="position:absolute;left:389.50px;width:1200px;text-align:center;top:373.50px;font-size:15px;line-height:15px;color:#262626;font-weight:normal;white-space:nowrap;">7</div>
<div style="position:absolute;left:1015.80px;top:373.50px;font-size:15px;line-height:15px;color:#262626;font-weight:normal;white-space:nowrap;">2.2.2.Хөрөнгө оруулагчийн өмнө нь оруулсан хөрөнгө оруулалтын хэмжээнээс 3 дахин</div>
<div style="position:absolute;left:40.00px;top:393.00px;width:69.00px;height:26.00px;overflow:hidden;">
<div style="position:absolute;left:2.00px;top:8.12px;font-size:12.5px;line-height:12.5px;color:#ff1a1a;font-weight:normal;white-space:nowrap;">3101 БХӨТ</div>
</div>
<div style="position:absolute;left:167.40px;top:399.50px;font-size:15px;line-height:15px;color:#222;font-weight:normal;white-space:nowrap;">Дотоод байгууллагад өглөг-ДБӨ</div>
<div style="position:absolute;left:554.50px;top:399.50px;font-size:15px;line-height:15px;color:#262626;font-weight:normal;white-space:nowrap;letter-spacing:-0.3px;">ХМ-13(1)</div>
<div style="position:absolute;left:-495.50px;width:1200px;text-align:right;top:399.50px;font-size:15px;line-height:15px;color:#262626;font-weight:normal;white-space:nowrap;">49</div>
<div style="position:absolute;left:152.00px;width:1200px;text-align:center;top:399.50px;font-size:15px;line-height:15px;color:#262626;font-weight:normal;white-space:nowrap;">0.90</div>
<div style="position:absolute;left:238.00px;width:1200px;text-align:center;top:399.50px;font-size:15px;line-height:15px;color:#262626;font-weight:normal;white-space:nowrap;">1.00</div>
<div style="position:absolute;left:885.00px;top:399.50px;font-size:15px;line-height:15px;color:#262626;font-weight:normal;white-space:nowrap;">ТТ-13</div>
<div style="position:absolute;left:389.50px;width:1200px;text-align:center;top:399.50px;font-size:15px;line-height:15px;color:#262626;font-weight:normal;white-space:nowrap;">8</div>
<div style="position:absolute;left:1015.80px;top:399.50px;font-size:15px;line-height:15px;color:#262626;font-weight:normal;white-space:nowrap;">2.2.3.Үнэ шилжилтийн хоёрдогч тохируулгын үр дүнд бий болсон үнийн зөрүү</div>
<div style="position:absolute;left:40.00px;top:419.00px;width:69.00px;height:26.00px;overflow:hidden;">
<div style="position:absolute;left:2.00px;top:8.12px;font-size:12.5px;line-height:12.5px;color:#ff1a1a;font-weight:normal;white-space:nowrap;">3106 БХӨТ</div>
</div>
<div style="position:absolute;left:167.40px;top:425.50px;font-size:15px;line-height:15px;color:#222;font-weight:normal;white-space:nowrap;">Бэлтгэн нийлүүлэгчдэд өгөх өглөг-БНӨӨ</div>
<div style="position:absolute;left:554.50px;top:425.50px;font-size:15px;line-height:15px;color:#262626;font-weight:normal;white-space:nowrap;letter-spacing:-0.3px;">ХМ-13(1)</div>
<div style="position:absolute;left:-495.50px;width:1200px;text-align:right;top:425.50px;font-size:15px;line-height:15px;color:#262626;font-weight:normal;white-space:nowrap;">50</div>
<div style="position:absolute;left:152.00px;width:1200px;text-align:center;top:425.50px;font-size:15px;line-height:15px;color:#262626;font-weight:normal;white-space:nowrap;">0.90</div>
<div style="position:absolute;left:238.00px;width:1200px;text-align:center;top:425.50px;font-size:15px;line-height:15px;color:#262626;font-weight:normal;white-space:nowrap;">1.00</div>
<div style="position:absolute;left:885.00px;top:425.50px;font-size:15px;line-height:15px;color:#262626;font-weight:normal;white-space:nowrap;">ТТ-13</div>
<div style="position:absolute;left:389.50px;width:1200px;text-align:center;top:425.50px;font-size:15px;line-height:15px;color:#262626;font-weight:normal;white-space:nowrap;">9</div>
<div style="position:absolute;left:1015.80px;top:425.50px;font-size:15px;line-height:15px;color:#262626;font-weight:normal;white-space:nowrap;">2.2.4.Төрийн өмчит аж ахуйн нэгжүүдээс Засгийн газарт хуваарилсан ногдол ашиг</div>
<div style="position:absolute;left:40.00px;top:445.00px;width:69.00px;height:26.00px;overflow:hidden;">
<div style="position:absolute;left:2.00px;top:8.12px;font-size:12.5px;line-height:12.5px;color:#ff1a1a;font-weight:normal;white-space:nowrap;">3201 БХӨТ</div>
</div>
<div style="position:absolute;left:167.40px;top:451.50px;font-size:15px;line-height:15px;color:#222;font-weight:normal;white-space:nowrap;">Банкны богино хугацаат өр төлбөр-БӨ</div>
<div style="position:absolute;left:554.50px;top:451.50px;font-size:15px;line-height:15px;color:#262626;font-weight:normal;white-space:nowrap;letter-spacing:-0.3px;">ХМ-13(1)</div>
<div style="position:absolute;left:-495.50px;width:1200px;text-align:right;top:451.50px;font-size:15px;line-height:15px;color:#262626;font-weight:normal;white-space:nowrap;">51</div>
<div style="position:absolute;left:152.00px;width:1200px;text-align:center;top:451.50px;font-size:15px;line-height:15px;color:#262626;font-weight:normal;white-space:nowrap;">0.90</div>
<div style="position:absolute;left:238.00px;width:1200px;text-align:center;top:451.50px;font-size:15px;line-height:15px;color:#262626;font-weight:normal;white-space:nowrap;">1.00</div>
<div style="position:absolute;left:885.00px;top:451.50px;font-size:15px;line-height:15px;color:#262626;font-weight:normal;white-space:nowrap;">ТТ-13</div>
<div style="position:absolute;left:389.50px;width:1200px;text-align:center;top:451.50px;font-size:15px;line-height:15px;color:#262626;font-weight:normal;white-space:nowrap;">13</div>
<div style="position:absolute;left:1015.80px;top:451.50px;font-size:15px;line-height:15px;color:#262626;font-weight:normal;white-space:nowrap;">2.3.1.Бусдад олгосон хүүгийн орлого</div>
<div style="position:absolute;left:40.00px;top:471.00px;width:69.00px;height:26.00px;overflow:hidden;">
<div style="position:absolute;left:2.00px;top:8.12px;font-size:12.5px;line-height:12.5px;color:#ff1a1a;font-weight:normal;white-space:nowrap;">3206 БХӨТ</div>
</div>
<div style="position:absolute;left:167.40px;top:477.50px;font-size:15px;line-height:15px;color:#222;font-weight:normal;white-space:nowrap;">Урьдчилж орсон орлого-УОО</div>
<div style="position:absolute;left:554.50px;top:477.50px;font-size:15px;line-height:15px;color:#262626;font-weight:normal;white-space:nowrap;letter-spacing:-0.3px;">ХМ-13(1)</div>
<div style="position:absolute;left:-495.50px;width:1200px;text-align:right;top:477.50px;font-size:15px;line-height:15px;color:#262626;font-weight:normal;white-space:nowrap;">52</div>
<div style="position:absolute;left:152.00px;width:1200px;text-align:center;top:477.50px;font-size:15px;line-height:15px;color:#262626;font-weight:normal;white-space:nowrap;">0.95</div>
<div style="position:absolute;left:238.00px;width:1200px;text-align:center;top:477.50px;font-size:15px;line-height:15px;color:#262626;font-weight:normal;white-space:nowrap;">1.00</div>
<div style="position:absolute;left:885.00px;top:477.50px;font-size:15px;line-height:15px;color:#262626;font-weight:normal;white-space:nowrap;">ТТ-13</div>
<div style="position:absolute;left:389.50px;width:1200px;text-align:center;top:477.50px;font-size:15px;line-height:15px;color:#262626;font-weight:normal;white-space:nowrap;">14</div>
<div style="position:absolute;left:1015.80px;top:477.50px;font-size:15px;line-height:15px;color:#262626;font-weight:normal;white-space:nowrap;">2.3.2.Ашигт малтмал, цацраг идэвхт ашигт малтмал, газрын тосны хайгуулын болон а</div>
<div style="position:absolute;left:40.00px;top:497.00px;width:69.00px;height:26.00px;overflow:hidden;">
<div style="position:absolute;left:2.00px;top:8.12px;font-size:12.5px;line-height:12.5px;color:#ff1a1a;font-weight:normal;white-space:nowrap;">3202 БХӨТ</div>
</div>
<div style="position:absolute;left:167.40px;top:503.50px;font-size:15px;line-height:15px;color:#222;font-weight:normal;white-space:nowrap;">Санхүүгийн түрээсийн өглөг-СТӨ</div>
<div style="position:absolute;left:554.50px;top:503.50px;font-size:15px;line-height:15px;color:#262626;font-weight:normal;white-space:nowrap;letter-spacing:-0.3px;">ХМ-13(1)</div>
<div style="position:absolute;left:-495.50px;width:1200px;text-align:right;top:503.50px;font-size:15px;line-height:15px;color:#262626;font-weight:normal;white-space:nowrap;">53</div>
<div style="position:absolute;left:152.00px;width:1200px;text-align:center;top:503.50px;font-size:15px;line-height:15px;color:#262626;font-weight:normal;white-space:nowrap;">0.95</div>
<div style="position:absolute;left:238.00px;width:1200px;text-align:center;top:503.50px;font-size:15px;line-height:15px;color:#262626;font-weight:normal;white-space:nowrap;">1.00</div>
<div style="position:absolute;left:885.00px;top:503.50px;font-size:15px;line-height:15px;color:#262626;font-weight:normal;white-space:nowrap;">ТТ-13</div>
<div style="position:absolute;left:389.50px;width:1200px;text-align:center;top:503.50px;font-size:15px;line-height:15px;color:#262626;font-weight:normal;white-space:nowrap;">15</div>
<div style="position:absolute;left:1015.80px;top:503.50px;font-size:15px;line-height:15px;color:#262626;font-weight:normal;white-space:nowrap;">2.3.3.Монгол Улсын арилжааны банкны дотоодын эх үүсвэрээс татсан зээл, өрийн хэр</div>
<div style="position:absolute;left:40.00px;top:523.00px;width:69.00px;height:26.00px;overflow:hidden;">
<div style="position:absolute;left:2.00px;top:8.12px;font-size:12.5px;line-height:12.5px;color:#ff1a1a;font-weight:normal;white-space:nowrap;">3301 УХӨТ</div>
</div>
<div style="position:absolute;left:167.40px;top:529.50px;font-size:15px;line-height:15px;color:#222;font-weight:normal;white-space:nowrap;">Урт хугацаат зээл-УХӨТ</div>
<div style="position:absolute;left:554.50px;top:529.50px;font-size:15px;line-height:15px;color:#262626;font-weight:normal;white-space:nowrap;letter-spacing:-0.3px;">ХМ-13(1)</div>
<div style="position:absolute;left:-495.50px;width:1200px;text-align:right;top:529.50px;font-size:15px;line-height:15px;color:#262626;font-weight:normal;white-space:nowrap;">54</div>
<div style="position:absolute;left:152.00px;width:1200px;text-align:center;top:529.50px;font-size:15px;line-height:15px;color:#262626;font-weight:normal;white-space:nowrap;">0.98</div>
<div style="position:absolute;left:238.00px;width:1200px;text-align:center;top:529.50px;font-size:15px;line-height:15px;color:#262626;font-weight:normal;white-space:nowrap;">1.00</div>
<div style="position:absolute;left:885.00px;top:529.50px;font-size:15px;line-height:15px;color:#262626;font-weight:normal;white-space:nowrap;">ТТ-13</div>
<div style="position:absolute;left:389.50px;width:1200px;text-align:center;top:529.50px;font-size:15px;line-height:15px;color:#262626;font-weight:normal;white-space:nowrap;">17</div>
<div style="position:absolute;left:1015.80px;top:529.50px;font-size:15px;line-height:15px;color:#262626;font-weight:normal;white-space:nowrap;">2.4.Үл хөдлөх эд хөрөнгө борлуулсан, шилжүүлсний орлого</div>
<div style="position:absolute;left:647.00px;width:1200px;text-align:right;top:529.50px;font-size:15px;line-height:15px;color:#111;font-weight:normal;white-space:nowrap;">196,000,000</div>
<div style="position:absolute;left:1852.00px;top:523.00px;width:42.00px;height:26.00px;overflow:hidden;">
<div style="position:absolute;left:10.00px;top:6.50px;font-size:15px;line-height:15px;color:#111;font-weight:normal;white-space:nowrap;">4,00</div>
</div>
<div style="position:absolute;left:40.00px;top:549.00px;width:69.00px;height:26.00px;overflow:hidden;">
<div style="position:absolute;left:2.00px;top:8.12px;font-size:12.5px;line-height:12.5px;color:#222;font-weight:normal;white-space:nowrap;">1211 ЭХ</div>
</div>
<div style="position:absolute;left:167.40px;top:555.50px;font-size:15px;line-height:15px;color:#222;font-weight:normal;white-space:nowrap;">Нийслэл хотын албан татварын тооцоо-НХАТ</div>
<div style="position:absolute;left:554.50px;top:555.50px;font-size:15px;line-height:15px;color:#262626;font-weight:normal;white-space:nowrap;letter-spacing:-0.3px;">ХМ-13(1)</div>
<div style="position:absolute;left:-495.50px;width:1200px;text-align:right;top:555.50px;font-size:15px;line-height:15px;color:#262626;font-weight:normal;white-space:nowrap;">55</div>
<div style="position:absolute;left:152.00px;width:1200px;text-align:center;top:555.50px;font-size:15px;line-height:15px;color:#262626;font-weight:normal;white-space:nowrap;">0.60</div>
<div style="position:absolute;left:238.00px;width:1200px;text-align:center;top:555.50px;font-size:15px;line-height:15px;color:#262626;font-weight:normal;white-space:nowrap;">1.00</div>
<div style="position:absolute;left:885.00px;top:555.50px;font-size:15px;line-height:15px;color:#262626;font-weight:normal;white-space:nowrap;">ТТ-13</div>
<div style="position:absolute;left:389.50px;width:1200px;text-align:center;top:555.50px;font-size:15px;line-height:15px;color:#262626;font-weight:normal;white-space:nowrap;">19</div>
<div style="position:absolute;left:1015.80px;top:555.50px;font-size:15px;line-height:15px;color:#262626;font-weight:normal;white-space:nowrap;">2.5.Төлбөрт таавар, бооцоот тоглоом, эд мөнгөний хонжворт сугалаанаас хожсон орл</div>
<div style="position:absolute;left:40.00px;top:575.00px;width:69.00px;height:26.00px;overflow:hidden;">
<div style="position:absolute;left:2.00px;top:8.12px;font-size:12.5px;line-height:12.5px;color:#222;font-weight:normal;white-space:nowrap;">1209 ЭХ</div>
</div>
<div style="position:absolute;left:-462.25px;width:1200px;text-align:center;top:583.18px;font-size:14.2px;line-height:14.2px;color:#f4f4f4;font-weight:normal;white-space:nowrap;">Шүүлт</div>
<div style="position:absolute;left:167.40px;top:581.50px;font-size:15px;line-height:15px;color:#222;font-weight:normal;white-space:nowrap;">ХХОАТ-ын тооцоо /суутган-2/-ХХОАТ2</div>
<div style="position:absolute;left:554.50px;top:581.50px;font-size:15px;line-height:15px;color:#262626;font-weight:normal;white-space:nowrap;letter-spacing:-0.3px;">ХМ-13(1)</div>
<div style="position:absolute;left:-495.50px;width:1200px;text-align:right;top:581.50px;font-size:15px;line-height:15px;color:#262626;font-weight:normal;white-space:nowrap;">56</div>
<div style="position:absolute;left:152.00px;width:1200px;text-align:center;top:581.50px;font-size:15px;line-height:15px;color:#262626;font-weight:normal;white-space:nowrap;">0.90</div>
<div style="position:absolute;left:238.00px;width:1200px;text-align:center;top:581.50px;font-size:15px;line-height:15px;color:#262626;font-weight:normal;white-space:nowrap;">1.00</div>
<div style="position:absolute;left:885.00px;top:581.50px;font-size:15px;line-height:15px;color:#262626;font-weight:normal;white-space:nowrap;">ТТ-13</div>
<div style="position:absolute;left:389.50px;width:1200px;text-align:center;top:581.50px;font-size:15px;line-height:15px;color:#262626;font-weight:normal;white-space:nowrap;">22</div>
<div style="position:absolute;left:1015.80px;top:581.50px;font-size:15px;line-height:15px;color:#262626;font-weight:normal;white-space:nowrap;">2.6.1.Байгаль орчинд нөлөөлөх байдлын үнэлгээний тухай хуулийн 9.11, Газрын тосн</div>
<div style="position:absolute;left:40.00px;top:601.00px;width:69.00px;height:26.00px;overflow:hidden;">
<div style="position:absolute;left:2.00px;top:8.12px;font-size:12.5px;line-height:12.5px;color:#ff1a1a;font-weight:normal;white-space:nowrap;">4102 ЭӨ</div>
</div>
<div style="position:absolute;left:-462.25px;width:1200px;text-align:center;top:609.18px;font-size:14.2px;line-height:14.2px;color:#f4f4f4;font-weight:normal;white-space:nowrap;">Шүүлт</div>
<div style="position:absolute;left:167.40px;top:607.50px;font-size:15px;line-height:15px;color:#222;font-weight:normal;white-space:nowrap;">Хувийн өмч-ЭӨ2</div>
<div style="position:absolute;left:554.50px;top:607.50px;font-size:15px;line-height:15px;color:#262626;font-weight:normal;white-space:nowrap;letter-spacing:-0.3px;">ХМ-13(1)</div>
<div style="position:absolute;left:-495.50px;width:1200px;text-align:right;top:607.50px;font-size:15px;line-height:15px;color:#262626;font-weight:normal;white-space:nowrap;">57</div>
<div style="position:absolute;left:152.00px;width:1200px;text-align:center;top:607.50px;font-size:15px;line-height:15px;color:#262626;font-weight:normal;white-space:nowrap;">0.90</div>
<div style="position:absolute;left:238.00px;width:1200px;text-align:center;top:607.50px;font-size:15px;line-height:15px;color:#262626;font-weight:normal;white-space:nowrap;">1.00</div>
<div style="position:absolute;left:885.00px;top:607.50px;font-size:15px;line-height:15px;color:#262626;font-weight:normal;white-space:nowrap;">ТТ-13</div>
<div style="position:absolute;left:389.50px;width:1200px;text-align:center;top:607.50px;font-size:15px;line-height:15px;color:#262626;font-weight:normal;white-space:nowrap;">23</div>
<div style="position:absolute;left:1015.80px;top:607.50px;font-size:15px;line-height:15px;color:#262626;font-weight:normal;white-space:nowrap;">2.6.2 Даатгалын нөхөн төлбөр</div>
<div style="position:absolute;left:40.00px;top:627.00px;width:69.00px;height:26.00px;overflow:hidden;">
<div style="position:absolute;left:2.00px;top:8.12px;font-size:12.5px;line-height:12.5px;color:#222;font-weight:normal;white-space:nowrap;">1220 БХӨТ</div>
</div>
<div style="position:absolute;left:-462.25px;width:1200px;text-align:center;top:635.18px;font-size:14.2px;line-height:14.2px;color:#f4f4f4;font-weight:normal;white-space:nowrap;">Шүүлт</div>
<div style="position:absolute;left:167.40px;top:633.50px;font-size:15px;line-height:15px;color:#222;font-weight:normal;white-space:nowrap;">Орлогын татварын тооцоо ТТ-13-ОАТ2</div>
<div style="position:absolute;left:554.50px;top:633.50px;font-size:15px;line-height:15px;color:#262626;font-weight:normal;white-space:nowrap;letter-spacing:-0.3px;">ХМ-13(1)</div>
<div style="position:absolute;left:-495.50px;width:1200px;text-align:right;top:633.50px;font-size:15px;line-height:15px;color:#262626;font-weight:normal;white-space:nowrap;">58</div>
<div style="position:absolute;left:152.00px;width:1200px;text-align:center;top:633.50px;font-size:15px;line-height:15px;color:#262626;font-weight:normal;white-space:nowrap;">0.80</div>
<div style="position:absolute;left:238.00px;width:1200px;text-align:center;top:633.50px;font-size:15px;line-height:15px;color:#262626;font-weight:normal;white-space:nowrap;">1.00</div>
<div style="position:absolute;left:885.00px;top:633.50px;font-size:15px;line-height:15px;color:#262626;font-weight:normal;white-space:nowrap;">ТТ-13</div>
<div style="position:absolute;left:389.50px;width:1200px;text-align:center;top:633.50px;font-size:15px;line-height:15px;color:#262626;font-weight:normal;white-space:nowrap;">26</div>
<div style="position:absolute;left:1015.80px;top:633.50px;font-size:15px;line-height:15px;color:#262626;font-weight:normal;white-space:nowrap;">2.7.1.Төлөөний газраар дамжуулан Монгол Улсад үйл ажиллагаа явуулдаг Монгол Улса</div>
<div style="position:absolute;left:40.00px;top:653.00px;width:69.00px;height:26.00px;overflow:hidden;">
<div style="position:absolute;left:2.00px;top:8.12px;font-size:12.5px;line-height:12.5px;color:#222;font-weight:normal;white-space:nowrap;">4111 ЭӨ</div>
</div>
<div style="position:absolute;left:167.40px;top:659.50px;font-size:15px;line-height:15px;color:#222;font-weight:normal;white-space:nowrap;">Эздийн өмч бусад Монгол-ЭӨБ</div>
<div style="position:absolute;left:554.50px;top:659.50px;font-size:15px;line-height:15px;color:#262626;font-weight:normal;white-space:nowrap;letter-spacing:-0.3px;">ХМ-13(1)</div>
<div style="position:absolute;left:-495.50px;width:1200px;text-align:right;top:659.50px;font-size:15px;line-height:15px;color:#262626;font-weight:normal;white-space:nowrap;">59</div>
<div style="position:absolute;left:152.00px;width:1200px;text-align:center;top:659.50px;font-size:15px;line-height:15px;color:#262626;font-weight:normal;white-space:nowrap;">0.80</div>
<div style="position:absolute;left:238.00px;width:1200px;text-align:center;top:659.50px;font-size:15px;line-height:15px;color:#262626;font-weight:normal;white-space:nowrap;">1.00</div>
<div style="position:absolute;left:885.00px;top:659.50px;font-size:15px;line-height:15px;color:#262626;font-weight:normal;white-space:nowrap;">ТТ-13</div>
<div style="position:absolute;left:389.50px;width:1200px;text-align:center;top:659.50px;font-size:15px;line-height:15px;color:#262626;font-weight:normal;white-space:nowrap;">27</div>
<div style="position:absolute;left:1015.80px;top:659.50px;font-size:15px;line-height:15px;color:#262626;font-weight:normal;white-space:nowrap;">2.7.2.Төлөөний газрын үйл ажиллагаатай холбогдох орлогыг Монгол Улсад байрладагг</div>
<div style="position:absolute;left:40.00px;top:679.00px;width:69.00px;height:24.00px;overflow:hidden;">
<div style="position:absolute;left:2.00px;top:6.12px;font-size:12.5px;line-height:12.5px;color:#222;font-weight:normal;white-space:nowrap;">4113 ЭӨ</div>
</div>
<div style="position:absolute;left:-462.25px;width:1200px;text-align:center;top:685.18px;font-size:14.2px;line-height:14.2px;color:#f4f4f4;font-weight:normal;white-space:nowrap;">Шүүлт</div>
<div style="position:absolute;left:167.40px;top:683.50px;font-size:15px;line-height:15px;color:#222;font-weight:normal;white-space:nowrap;">Хуримтлагдсан ашиг:-ха</div>
<div style="position:absolute;left:554.50px;top:683.50px;font-size:15px;line-height:15px;color:#262626;font-weight:normal;white-space:nowrap;letter-spacing:-0.3px;">ХМ-13(1)</div>
<div style="position:absolute;left:-495.50px;width:1200px;text-align:right;top:683.50px;font-size:15px;line-height:15px;color:#262626;font-weight:normal;white-space:nowrap;">60</div>
<div style="position:absolute;left:152.00px;width:1200px;text-align:center;top:683.50px;font-size:15px;line-height:15px;color:#262626;font-weight:normal;white-space:nowrap;">0.80</div>
<div style="position:absolute;left:238.00px;width:1200px;text-align:center;top:683.50px;font-size:15px;line-height:15px;color:#262626;font-weight:normal;white-space:nowrap;">1.00</div>
<div style="position:absolute;left:885.00px;top:683.50px;font-size:15px;line-height:15px;color:#262626;font-weight:normal;white-space:nowrap;">ТТ-13</div>
<div style="position:absolute;left:389.50px;width:1200px;text-align:center;top:683.50px;font-size:15px;line-height:15px;color:#262626;font-weight:normal;white-space:nowrap;">28</div>
<div style="position:absolute;left:1015.80px;top:683.50px;font-size:15px;line-height:15px;color:#262626;font-weight:normal;white-space:nowrap;">2.7.3.Тухайн татварын жилд төлөөний газраас өөрийн толгой аж ахуйн нэгжид шилжүү</div>
<div style="position:absolute;left:40.00px;top:703.00px;width:69.00px;height:25.00px;overflow:hidden;">
<div style="position:absolute;left:2.00px;top:7.12px;font-size:12.5px;line-height:12.5px;color:#222;font-weight:normal;white-space:nowrap;">4203 ЭӨ</div>
</div>
<div style="position:absolute;left:-462.25px;width:1200px;text-align:center;top:710.58px;font-size:9px;line-height:9px;color:#e0e0e0;font-weight:normal;white-space:nowrap;">_</div>
<div style="position:absolute;left:167.40px;top:708.50px;font-size:15px;line-height:15px;color:#222;font-weight:normal;white-space:nowrap;">Ногдол ашиг-НА</div>
<div style="position:absolute;left:554.50px;top:708.50px;font-size:15px;line-height:15px;color:#262626;font-weight:normal;white-space:nowrap;letter-spacing:-0.3px;">ХМ-13(1)</div>
<div style="position:absolute;left:-495.50px;width:1200px;text-align:right;top:708.50px;font-size:15px;line-height:15px;color:#262626;font-weight:normal;white-space:nowrap;">61</div>
<div style="position:absolute;left:152.00px;width:1200px;text-align:center;top:708.50px;font-size:15px;line-height:15px;color:#262626;font-weight:normal;white-space:nowrap;">1.00</div>
<div style="position:absolute;left:238.00px;width:1200px;text-align:center;top:708.50px;font-size:15px;line-height:15px;color:#262626;font-weight:normal;white-space:nowrap;">1.00</div>
<div style="position:absolute;left:885.00px;top:708.50px;font-size:15px;line-height:15px;color:#262626;font-weight:normal;white-space:nowrap;">ТТ-13</div>
<div style="position:absolute;left:389.50px;width:1200px;text-align:center;top:708.50px;font-size:15px;line-height:15px;color:#262626;font-weight:normal;white-space:nowrap;">31</div>
<div style="position:absolute;left:1015.80px;top:708.50px;font-size:15px;line-height:15px;color:#262626;font-weight:normal;white-space:nowrap;">2.8.1.Газрын тосны салбарт бүтээгдэхүүн хуваах гэрээний дагуу Монгол улсын нутаг</div>
<div style="position:absolute;left:40.00px;top:728.00px;width:69.00px;height:24.00px;overflow:hidden;">
<div style="position:absolute;left:2.00px;top:6.12px;font-size:12.5px;line-height:12.5px;color:#ff1a1a;font-weight:normal;white-space:nowrap;">5101 Орлого</div>
</div>
<div style="position:absolute;left:167.40px;top:732.50px;font-size:15px;line-height:15px;color:#222;font-weight:normal;white-space:nowrap;">Борлуулалт-Борлуулалт</div>
<div style="position:absolute;left:554.50px;top:732.50px;font-size:15px;line-height:15px;color:#262626;font-weight:normal;white-space:nowrap;letter-spacing:-0.3px;">ХМ-13(2)</div>
<div style="position:absolute;left:-495.50px;width:1200px;text-align:right;top:732.50px;font-size:15px;line-height:15px;color:#262626;font-weight:normal;white-space:nowrap;">62</div>
<div style="position:absolute;left:152.00px;width:1200px;text-align:center;top:732.50px;font-size:15px;line-height:15px;color:#262626;font-weight:normal;white-space:nowrap;">0.80</div>
<div style="position:absolute;left:238.00px;width:1200px;text-align:center;top:732.50px;font-size:15px;line-height:15px;color:#262626;font-weight:normal;white-space:nowrap;">1.00</div>
<div style="position:absolute;left:885.00px;top:732.50px;font-size:15px;line-height:15px;color:#262626;font-weight:normal;white-space:nowrap;">ТТ-13</div>
<div style="position:absolute;left:389.50px;width:1200px;text-align:center;top:732.50px;font-size:15px;line-height:15px;color:#262626;font-weight:normal;white-space:nowrap;">36</div>
<div style="position:absolute;left:1015.80px;top:732.50px;font-size:15px;line-height:15px;color:#262626;font-weight:normal;white-space:nowrap;">3.1.1.1.Бараа, ажил, үйлчилгээний борлуулалтын орлого</div>
<div style="position:absolute;left:647.00px;width:1200px;text-align:right;top:732.50px;font-size:15px;line-height:15px;color:#111;font-weight:normal;white-space:nowrap;">1,600,000</div>
<div style="position:absolute;left:1852.00px;top:728.00px;width:42.00px;height:24.00px;overflow:hidden;">
<div style="position:absolute;left:26.00px;top:4.50px;font-size:15px;line-height:15px;color:#111;font-weight:normal;white-space:nowrap;">40</div>
</div>
<div style="position:absolute;left:40.00px;top:752.00px;width:69.00px;height:25.00px;overflow:hidden;">
<div style="position:absolute;left:2.00px;top:7.12px;font-size:12.5px;line-height:12.5px;color:#ff1a1a;font-weight:normal;white-space:nowrap;">5102 Орлого</div>
</div>
<div style="position:absolute;left:167.40px;top:757.50px;font-size:15px;line-height:15px;color:#222;font-weight:normal;white-space:nowrap;">Бусад борлуулалт-БО</div>
<div style="position:absolute;left:554.50px;top:757.50px;font-size:15px;line-height:15px;color:#262626;font-weight:normal;white-space:nowrap;letter-spacing:-0.3px;">ХМ-13(2)</div>
<div style="position:absolute;left:-495.50px;width:1200px;text-align:right;top:757.50px;font-size:15px;line-height:15px;color:#262626;font-weight:normal;white-space:nowrap;">63</div>
<div style="position:absolute;left:152.00px;width:1200px;text-align:center;top:757.50px;font-size:15px;line-height:15px;color:#262626;font-weight:normal;white-space:nowrap;">0.80</div>
<div style="position:absolute;left:238.00px;width:1200px;text-align:center;top:757.50px;font-size:15px;line-height:15px;color:#262626;font-weight:normal;white-space:nowrap;">1.00</div>
<div style="position:absolute;left:885.00px;top:757.50px;font-size:15px;line-height:15px;color:#262626;font-weight:normal;white-space:nowrap;">ТТ-13</div>
<div style="position:absolute;left:389.50px;width:1200px;text-align:center;top:757.50px;font-size:15px;line-height:15px;color:#262626;font-weight:normal;white-space:nowrap;">37</div>
<div style="position:absolute;left:1015.80px;top:757.50px;font-size:15px;line-height:15px;color:#262626;font-weight:normal;white-space:nowrap;">3.1.1.2.Техникийн, удирдлагын, зөвлөхийн болон бусад үйлчилгээний орлого</div>
<div style="position:absolute;left:40.00px;top:777.00px;width:69.00px;height:24.00px;overflow:hidden;">
<div style="position:absolute;left:2.00px;top:6.12px;font-size:12.5px;line-height:12.5px;color:#222;font-weight:normal;white-space:nowrap;">6101 Зардал</div>
</div>
<div style="position:absolute;left:167.40px;top:781.50px;font-size:15px;line-height:15px;color:#222;font-weight:normal;white-space:nowrap;">Түүхий эд материалын зардал-ББӨ</div>
<div style="position:absolute;left:554.50px;top:781.50px;font-size:15px;line-height:15px;color:#262626;font-weight:normal;white-space:nowrap;letter-spacing:-0.3px;">ХМ-13(2)</div>
<div style="position:absolute;left:-495.50px;width:1200px;text-align:right;top:781.50px;font-size:15px;line-height:15px;color:#262626;font-weight:normal;white-space:nowrap;">64</div>
<div style="position:absolute;left:152.00px;width:1200px;text-align:center;top:781.50px;font-size:15px;line-height:15px;color:#262626;font-weight:normal;white-space:nowrap;">0.80</div>
<div style="position:absolute;left:238.00px;width:1200px;text-align:center;top:781.50px;font-size:15px;line-height:15px;color:#262626;font-weight:normal;white-space:nowrap;">1.00</div>
<div style="position:absolute;left:885.00px;top:781.50px;font-size:15px;line-height:15px;color:#262626;font-weight:normal;white-space:nowrap;">ТТ-13</div>
<div style="position:absolute;left:389.50px;width:1200px;text-align:center;top:781.50px;font-size:15px;line-height:15px;color:#262626;font-weight:normal;white-space:nowrap;">38</div>
<div style="position:absolute;left:1015.80px;top:781.50px;font-size:15px;line-height:15px;color:#262626;font-weight:normal;white-space:nowrap;">3.1.1.3.Үнэ төлбөргүйгээр бусдаас авсан бараа, ажил, үйлчилгээний орлого</div>
<div style="position:absolute;left:40.00px;top:801.00px;width:69.00px;height:25.00px;overflow:hidden;">
<div style="position:absolute;left:2.00px;top:7.12px;font-size:12.5px;line-height:12.5px;color:#222;font-weight:normal;white-space:nowrap;">7001 Зардал</div>
</div>
<div style="position:absolute;left:167.40px;top:806.50px;font-size:15px;line-height:15px;color:#222;font-weight:normal;white-space:nowrap;">Цалин хөлс, шагнал-ЦЗ</div>
<div style="position:absolute;left:554.50px;top:806.50px;font-size:15px;line-height:15px;color:#262626;font-weight:normal;white-space:nowrap;letter-spacing:-0.3px;">ХМ-13(2)</div>
<div style="position:absolute;left:-495.50px;width:1200px;text-align:right;top:806.50px;font-size:15px;line-height:15px;color:#262626;font-weight:normal;white-space:nowrap;">65</div>
<div style="position:absolute;left:152.00px;width:1200px;text-align:center;top:806.50px;font-size:15px;line-height:15px;color:#262626;font-weight:normal;white-space:nowrap;">0.80</div>
<div style="position:absolute;left:238.00px;width:1200px;text-align:center;top:806.50px;font-size:15px;line-height:15px;color:#262626;font-weight:normal;white-space:nowrap;">1.00</div>
<div style="position:absolute;left:885.00px;top:806.50px;font-size:15px;line-height:15px;color:#262626;font-weight:normal;white-space:nowrap;">ТТ-13</div>
<div style="position:absolute;left:389.50px;width:1200px;text-align:center;top:806.50px;font-size:15px;line-height:15px;color:#262626;font-weight:normal;white-space:nowrap;">39</div>
<div style="position:absolute;left:1015.80px;top:806.50px;font-size:15px;line-height:15px;color:#262626;font-weight:normal;white-space:nowrap;">3.1.1.4.Адилтгах бусад орлого</div>
<div style="position:absolute;left:40.00px;top:826.00px;width:69.00px;height:24.00px;overflow:hidden;">
<div style="position:absolute;left:2.00px;top:6.12px;font-size:12.5px;line-height:12.5px;color:#222;font-weight:normal;white-space:nowrap;">7002 Зардал</div>
</div>
<div style="position:absolute;left:167.40px;top:830.50px;font-size:15px;line-height:15px;color:#222;font-weight:normal;white-space:nowrap;">Нийгмийн даатгалын шимтгэл-НДШЗ</div>
<div style="position:absolute;left:554.50px;top:830.50px;font-size:15px;line-height:15px;color:#262626;font-weight:normal;white-space:nowrap;letter-spacing:-0.3px;">ХМ-13(2)</div>
<div style="position:absolute;left:-495.50px;width:1200px;text-align:right;top:830.50px;font-size:15px;line-height:15px;color:#262626;font-weight:normal;white-space:nowrap;">66</div>
<div style="position:absolute;left:152.00px;width:1200px;text-align:center;top:830.50px;font-size:15px;line-height:15px;color:#262626;font-weight:normal;white-space:nowrap;">0.80</div>
<div style="position:absolute;left:238.00px;width:1200px;text-align:center;top:830.50px;font-size:15px;line-height:15px;color:#262626;font-weight:normal;white-space:nowrap;">1.00</div>
<div style="position:absolute;left:885.00px;top:830.50px;font-size:15px;line-height:15px;color:#262626;font-weight:normal;white-space:nowrap;">ТТ-13</div>
<div style="position:absolute;left:389.50px;width:1200px;text-align:center;top:830.50px;font-size:15px;line-height:15px;color:#262626;font-weight:normal;white-space:nowrap;">41</div>
<div style="position:absolute;left:1015.80px;top:830.50px;font-size:15px;line-height:15px;color:#262626;font-weight:normal;white-space:nowrap;">3.1.2.1.Хөдлөх болон үл хөдлөх эд хөрөнгө ашиглуулсан болон түрээслүүлсний орлого</div>
<div style="position:absolute;left:40.00px;top:850.00px;width:69.00px;height:24.00px;overflow:hidden;">
<div style="position:absolute;left:2.00px;top:6.12px;font-size:12.5px;line-height:12.5px;color:#222;font-weight:normal;white-space:nowrap;">7012 Зардал</div>
</div>
<div style="position:absolute;left:167.40px;top:854.50px;font-size:15px;line-height:15px;color:#222;font-weight:normal;white-space:nowrap;">Урсгал засварын зардал-УЗЗ</div>
<div style="position:absolute;left:554.50px;top:854.50px;font-size:15px;line-height:15px;color:#262626;font-weight:normal;white-space:nowrap;letter-spacing:-0.3px;">ХМ-13(2)</div>
<div style="position:absolute;left:-495.50px;width:1200px;text-align:right;top:854.50px;font-size:15px;line-height:15px;color:#262626;font-weight:normal;white-space:nowrap;">67</div>
<div style="position:absolute;left:152.00px;width:1200px;text-align:center;top:854.50px;font-size:15px;line-height:15px;color:#262626;font-weight:normal;white-space:nowrap;">0.80</div>
<div style="position:absolute;left:238.00px;width:1200px;text-align:center;top:854.50px;font-size:15px;line-height:15px;color:#262626;font-weight:normal;white-space:nowrap;">1.00</div>
<div style="position:absolute;left:885.00px;top:854.50px;font-size:15px;line-height:15px;color:#262626;font-weight:normal;white-space:nowrap;">ТТ-13</div>
<div style="position:absolute;left:389.50px;width:1200px;text-align:center;top:854.50px;font-size:15px;line-height:15px;color:#262626;font-weight:normal;white-space:nowrap;">42</div>
<div style="position:absolute;left:1015.80px;top:854.50px;font-size:15px;line-height:15px;color:#262626;font-weight:normal;white-space:nowrap;">3.1.2.2.Эрхийн шимтгэлийн орлого</div>
<div style="position:absolute;left:40.00px;top:874.00px;width:69.00px;height:25.00px;overflow:hidden;">
<div style="position:absolute;left:2.00px;top:7.12px;font-size:12.5px;line-height:12.5px;color:#222;font-weight:normal;white-space:nowrap;">7016 Зардал</div>
</div>
<div style="position:absolute;left:-462.25px;width:1200px;text-align:center;top:881.18px;font-size:14.2px;line-height:14.2px;color:#f4f4f4;font-weight:normal;white-space:nowrap;">Шүүлт</div>
<div style="position:absolute;left:167.40px;top:879.50px;font-size:15px;line-height:15px;color:#222;font-weight:normal;white-space:nowrap;">Үйлчилгээний зардал-ҮЗ</div>
<div style="position:absolute;left:554.50px;top:879.50px;font-size:15px;line-height:15px;color:#262626;font-weight:normal;white-space:nowrap;letter-spacing:-0.3px;">ХМ-13(2)</div>
<div style="position:absolute;left:-495.50px;width:1200px;text-align:right;top:879.50px;font-size:15px;line-height:15px;color:#262626;font-weight:normal;white-space:nowrap;">68</div>
<div style="position:absolute;left:152.00px;width:1200px;text-align:center;top:879.50px;font-size:15px;line-height:15px;color:#262626;font-weight:normal;white-space:nowrap;">0.80</div>
<div style="position:absolute;left:238.00px;width:1200px;text-align:center;top:879.50px;font-size:15px;line-height:15px;color:#262626;font-weight:normal;white-space:nowrap;">1.00</div>
<div style="position:absolute;left:885.00px;top:879.50px;font-size:15px;line-height:15px;color:#262626;font-weight:normal;white-space:nowrap;">ТТ-13</div>
<div style="position:absolute;left:389.50px;width:1200px;text-align:center;top:879.50px;font-size:15px;line-height:15px;color:#262626;font-weight:normal;white-space:nowrap;">43</div>
<div style="position:absolute;left:1015.80px;top:879.50px;font-size:15px;line-height:15px;color:#262626;font-weight:normal;white-space:nowrap;">3.1.2.3.Ногдол ашгийн орлого</div>
<div style="position:absolute;left:40.00px;top:899.00px;width:69.00px;height:24.00px;overflow:hidden;">
<div style="position:absolute;left:2.00px;top:6.12px;font-size:12.5px;line-height:12.5px;color:#222;font-weight:normal;white-space:nowrap;">7014 Зардал</div>
</div>
<div style="position:absolute;left:167.40px;top:903.50px;font-size:15px;line-height:15px;color:#222;font-weight:normal;white-space:nowrap;">Түрээсийн зардал-ТҮЗ</div>
<div style="position:absolute;left:554.50px;top:903.50px;font-size:15px;line-height:15px;color:#262626;font-weight:normal;white-space:nowrap;letter-spacing:-0.3px;">ХМ-13(2)</div>
<div style="position:absolute;left:-495.50px;width:1200px;text-align:right;top:903.50px;font-size:15px;line-height:15px;color:#262626;font-weight:normal;white-space:nowrap;">69</div>
<div style="position:absolute;left:152.00px;width:1200px;text-align:center;top:903.50px;font-size:15px;line-height:15px;color:#262626;font-weight:normal;white-space:nowrap;">0.80</div>
<div style="position:absolute;left:238.00px;width:1200px;text-align:center;top:903.50px;font-size:15px;line-height:15px;color:#262626;font-weight:normal;white-space:nowrap;">1.00</div>
<div style="position:absolute;left:885.00px;top:903.50px;font-size:15px;line-height:15px;color:#262626;font-weight:normal;white-space:nowrap;">ТТ-13</div>
<div style="position:absolute;left:389.50px;width:1200px;text-align:center;top:903.50px;font-size:15px;line-height:15px;color:#262626;font-weight:normal;white-space:nowrap;">44</div>
<div style="position:absolute;left:1015.80px;top:903.50px;font-size:15px;line-height:15px;color:#262626;font-weight:normal;white-space:nowrap;">3.1.2.4.Хүүгийн орлого</div>
<div style="position:absolute;left:40.00px;top:923.00px;width:69.00px;height:25.00px;overflow:hidden;">
<div style="position:absolute;left:2.00px;top:7.12px;font-size:12.5px;line-height:12.5px;color:#222;font-weight:normal;white-space:nowrap;">7017 Зардал</div>
</div>
<div style="position:absolute;left:167.40px;top:928.50px;font-size:15px;line-height:15px;color:#222;font-weight:normal;white-space:nowrap;">Тээврийн зардал-ТЭЗ</div>
<div style="position:absolute;left:554.50px;top:928.50px;font-size:15px;line-height:15px;color:#262626;font-weight:normal;white-space:nowrap;letter-spacing:-0.3px;">ХМ-13(2)</div>
<div style="position:absolute;left:-495.50px;width:1200px;text-align:right;top:928.50px;font-size:15px;line-height:15px;color:#262626;font-weight:normal;white-space:nowrap;">70</div>
<div style="position:absolute;left:152.00px;width:1200px;text-align:center;top:928.50px;font-size:15px;line-height:15px;color:#262626;font-weight:normal;white-space:nowrap;">0.80</div>
<div style="position:absolute;left:238.00px;width:1200px;text-align:center;top:928.50px;font-size:15px;line-height:15px;color:#262626;font-weight:normal;white-space:nowrap;">1.00</div>
<div style="position:absolute;left:885.00px;top:928.50px;font-size:15px;line-height:15px;color:#262626;font-weight:normal;white-space:nowrap;">ТТ-13</div>
<div style="position:absolute;left:389.50px;width:1200px;text-align:center;top:928.50px;font-size:15px;line-height:15px;color:#262626;font-weight:normal;white-space:nowrap;">46</div>
<div style="position:absolute;left:1015.80px;top:928.50px;font-size:15px;line-height:15px;color:#262626;font-weight:normal;white-space:nowrap;">3.1.3.1.Үл хөдлөх эд хөрөнгө борлуулсны орлого</div>
<div style="position:absolute;left:40.00px;top:948.00px;width:69.00px;height:24.00px;overflow:hidden;">
<div style="position:absolute;left:2.00px;top:6.12px;font-size:12.5px;line-height:12.5px;color:#222;font-weight:normal;white-space:nowrap;">7020 Зардал</div>
</div>
<div style="position:absolute;left:167.40px;top:952.50px;font-size:15px;line-height:15px;color:#222;font-weight:normal;white-space:nowrap;">Зар сурталчилгаа-ЗС</div>
<div style="position:absolute;left:554.50px;top:952.50px;font-size:15px;line-height:15px;color:#262626;font-weight:normal;white-space:nowrap;letter-spacing:-0.3px;">ХМ-13(2)</div>
<div style="position:absolute;left:-495.50px;width:1200px;text-align:right;top:952.50px;font-size:15px;line-height:15px;color:#262626;font-weight:normal;white-space:nowrap;">71</div>
<div style="position:absolute;left:152.00px;width:1200px;text-align:center;top:952.50px;font-size:15px;line-height:15px;color:#262626;font-weight:normal;white-space:nowrap;">0.80</div>
<div style="position:absolute;left:238.00px;width:1200px;text-align:center;top:952.50px;font-size:15px;line-height:15px;color:#262626;font-weight:normal;white-space:nowrap;">1.00</div>
<div style="position:absolute;left:885.00px;top:952.50px;font-size:15px;line-height:15px;color:#262626;font-weight:normal;white-space:nowrap;">ТТ-13</div>
<div style="position:absolute;left:389.50px;width:1200px;text-align:center;top:952.50px;font-size:15px;line-height:15px;color:#262626;font-weight:normal;white-space:nowrap;">47</div>
<div style="position:absolute;left:1015.80px;top:952.50px;font-size:15px;line-height:15px;color:#262626;font-weight:normal;white-space:nowrap;">3.1.3.2.Төрийн байгууллагаас олгосон эрх борлуулсан, шилжүүлсний орлого</div>
<div style="position:absolute;left:551.50px;top:209.00px;width:1.50px;height:763.00px;background:#1a1ad0"></div>
<div style="position:absolute;left:552.00px;top:209.00px;width:1342.00px;height:2.00px;background:#1a1ad0"></div>
<div style="position:absolute;left:1893.50px;top:209.00px;width:1.50px;height:763.00px;background:#b0b0b0"></div>
<div style="position:absolute;left:1894.30px;top:135.00px;width:25.70px;height:838.00px;background:#e6e6e6"></div>
<div style="position:absolute;left:1898.00px;top:155.50px;width:19.00px;height:799.00px;background:#dadada"></div>
<div style="position:absolute;left:1898.00px;top:137.00px;width:19.00px;height:19.00px;background:#fff;border:1px solid #c6c6c6"></div>
<div style="position:absolute;left:1898.00px;top:304.00px;width:19.00px;height:164.00px;background:#fff;border:1px solid #c6c6c6"></div>
<div style="position:absolute;left:1898.00px;top:954.00px;width:19.00px;height:19.00px;background:#fff;border:1px solid #c6c6c6"></div>
<div style="position:absolute;left:1894.00px;top:209.40px;width:1.20px;height:763.00px;background:#b4b4b4"></div>
<svg style="left:1898px;top:137px" width="19" height="836"><polygon points="4.5,11.5 14.5,11.5 9.5,6.5" fill="#666"/><polygon points="4.5,824 14.5,824 9.5,829" fill="#666"/></svg>
<div style="position:absolute;left:0.00px;top:973.00px;width:1920.00px;height:29.50px;background:#e6e6e6;border-top:1px solid #c6c6c6"></div>
<svg style="left:0;top:973px" width="1920" height="30"><polygon points="33,10.5 33,19.5 28,15" fill="#bdbdbd"/><polygon points="57,10.5 57,19.5 62,15" fill="#bdbdbd"/><rect x="103.5" y="5" width="1" height="19" fill="#8a8a8a"/><rect x="167" y="5" width="1" height="19" fill="#8a8a8a"/><rect x="257" y="5" width="1" height="19" fill="#8a8a8a"/><rect x="327" y="5" width="1" height="19" fill="#8a8a8a"/><rect x="638" y="5" width="1" height="19" fill="#8a8a8a"/><rect x="703" y="5" width="1" height="19" fill="#8a8a8a"/><rect x="759.5" y="5" width="1" height="19" fill="#8a8a8a"/><circle cx="803" cy="15" r="9.5" stroke="#c4c4c4" stroke-width="1.2" fill="none"/><path d="M797.5 15 L808.5 15 M803 9.5 L803 20.5" stroke="#c4c4c4" stroke-width="1.2"/><rect x="1149" y="6.5" width="2.5" height="2.5" fill="#b0b0b0"/><rect x="1149" y="12.5" width="2.5" height="2.5" fill="#b0b0b0"/><rect x="1149" y="18.5" width="2.5" height="2.5" fill="#b0b0b0"/></svg>
<div style="position:absolute;left:106.00px;top:976.00px;width:59.00px;height:22.50px;background:#0000e6"></div>
<div style="position:absolute;left:116.40px;top:975.81px;font-size:17px;line-height:17px;color:#ffffff;font-weight:normal;white-space:nowrap;">Main</div>
<div style="position:absolute;left:181.60px;top:974.79px;font-size:18.2px;line-height:18.2px;color:#444444;font-weight:normal;white-space:nowrap;">togtmol</div>
<div style="position:absolute;left:269.00px;top:975.39px;font-size:17.5px;line-height:17.5px;color:#444444;font-weight:normal;white-space:nowrap;">jurnal</div>
<div style="position:absolute;left:330.00px;top:976.00px;width:117.00px;height:22.50px;background:#ffff00"></div>
<div style="position:absolute;left:341.40px;top:975.30px;font-size:17.6px;line-height:17.6px;color:#3a3a3a;font-weight:normal;white-space:nowrap;">tootsoonegt</div>
<div style="position:absolute;left:449.60px;top:973.00px;width:109.00px;height:25.50px;background:linear-gradient(#ffffff,#f3f3b8);border-bottom:2.5px solid #217346;border-left:1px solid #c6c6c6;border-right:1px solid #c6c6c6"></div>
<div style="position:absolute;left:461.00px;top:976.40px;font-size:16.3px;line-height:16.3px;color:#217346;font-weight:bold;white-space:nowrap;">aj_husnegt</div>
<div style="position:absolute;left:571.30px;top:975.56px;font-size:17.3px;line-height:17.3px;color:#444444;font-weight:normal;white-space:nowrap;">jurnal1</div>
<div style="position:absolute;left:651.00px;top:975.81px;font-size:17px;line-height:17px;color:#444444;font-weight:normal;white-space:nowrap;">Pivot</div>
<div style="position:absolute;left:716.50px;top:977.08px;font-size:15.5px;line-height:15.5px;color:#444444;font-weight:normal;white-space:nowrap;letter-spacing:0.3px;">OTT</div>
<div style="position:absolute;left:1167.00px;top:978.40px;width:18.40px;height:18.00px;background:#fff;border:1px solid #c6c6c6"></div>
<div style="position:absolute;left:1193.00px;top:978.40px;width:679.30px;height:18.00px;background:#fff;border:1px solid #c6c6c6"></div>
<div style="position:absolute;left:1875.00px;top:978.40px;width:17.50px;height:18.00px;background:#fff;border:1px solid #c6c6c6"></div>
<svg style="left:1160px;top:973px" width="760" height="30"><polygon points="17.5,11 17.5,20 13,15.5" fill="#444"/><polygon points="722,11 722,20 726.5,15.5" fill="#444"/></svg>
<div style="position:absolute;left:0.00px;top:1002.50px;width:1920.00px;height:27.50px;background:#f3f3f3;border-top:1px solid #d2d2d2"></div>
<div style="position:absolute;left:1648.00px;top:1003.00px;width:49.00px;height:26.50px;background:#c6c6c6"></div>
<svg style="left:1550px;top:1002px" width="370" height="28"><rect x="15.5" y="6.5" width="15.5" height="15" stroke="#555" stroke-width="1" fill="none"/><path d="M20.7 6.5 L20.7 21.5 M25.8 6.5 L25.8 21.5 M15.5 11.5 L31 11.5 M15.5 16.5 L31 16.5" stroke="#555" stroke-width="1"/><rect x="64.7" y="6.5" width="15.8" height="14" stroke="#555" stroke-width="1" fill="none"/><rect x="68.5" y="8.8" width="8.5" height="9.9" stroke="#555" stroke-width="1" fill="none"/><path d="M70.3 11.5 L75.3 11.5 M70.3 13.8 L75.3 13.8 M70.3 16 L75.3 16" stroke="#555" stroke-width="0.9"/><rect x="114.8" y="6.5" width="15.7" height="15" stroke="#555" stroke-width="1" fill="none"/><path d="M119.6 6.5 L119.6 15.4 M124.7 6.5 L124.7 15.4 L114.8 15.4" stroke="#555" stroke-width="1" fill="none"/><path d="M155 13.5 L164.6 13.5" stroke="#444" stroke-width="1"/><path d="M172 14 L295 14" stroke="#a8a8a8" stroke-width="1"/><rect x="234" y="7" width="5" height="14" fill="#666"/><path d="M301 14 L311 14 M306 9 L306 19" stroke="#555" stroke-width="1.2"/></svg>
<div style="position:absolute;left:1877.00px;top:1010.24px;font-size:13.3px;line-height:13.3px;color:#444444;font-weight:normal;white-space:nowrap;">115%</div>
<div style="position:absolute;left:0.00px;top:1030.00px;width:1920.00px;height:50.00px;background:#1e1c22"></div>
<div style="position:absolute;left:622.00px;top:1030.00px;width:61.20px;height:50.00px;background:#3c3a40"></div>
<div style="position:absolute;left:255.00px;top:1077.00px;width:51.00px;height:3.00px;background:#76b9ed"></div>
<div style="position:absolute;left:317.00px;top:1077.00px;width:51.00px;height:3.00px;background:#76b9ed"></div>
<div style="position:absolute;left:565.00px;top:1077.00px;width:51.00px;height:3.00px;background:#76b9ed"></div>
<div style="position:absolute;left:622.00px;top:1077.00px;width:61.20px;height:3.00px;background:#76b9ed"></div>
<svg style="left:0;top:1030px" width="700" height="50"><polygon points="19.7,16.3 28.3,15 28.3,24.3 19.7,24.3" fill="#fff"/><polygon points="29.8,14.8 40.3,13.3 40.3,24.3 29.8,24.3" fill="#fff"/><polygon points="19.7,25.8 28.3,25.8 28.3,35 19.7,33.8" fill="#fff"/><polygon points="29.8,25.8 40.3,25.8 40.3,36.8 29.8,35.3" fill="#fff"/><path d="M82 14 L105 14 L102 19 L86 19 Z" fill="#b8b8b8"/><rect x="80" y="19" width="22" height="14" fill="#9ab0c0"/><rect x="82" y="21" width="16" height="6" fill="#5ac8e8"/><rect x="95" y="25" width="13" height="14" fill="#e8e8e8"/><rect x="97" y="27" width="5" height="5" fill="#c89020"/><rect x="148" y="11.5" width="22" height="27" rx="1.5" fill="#1a6fd0"/><rect x="155" y="14" width="15" height="10" fill="#37b0e8"/><rect x="152" y="25" width="18" height="13" fill="#2490e0"/><rect x="140.6" y="17" width="16" height="15.5" rx="1" fill="#0a5bb5"/><ellipse cx="148.6" cy="24.8" rx="4" ry="4.5" stroke="#fff" stroke-width="2" fill="none"/><path d="M204 13 L213 13 L215 15.5 L231.6 15.5 L231.6 35.6 L204 35.6 Z" fill="#f5c242"/><rect x="204" y="18" width="27.6" height="17.6" fill="#fbd35a"/><path d="M211 35.6 L211 27 L224.5 27 L224.5 35.6" stroke="#3a8fdc" stroke-width="3.5" fill="none"/><rect x="271" y="11" width="23.4" height="27.4" rx="1.5" fill="#2b7cd3"/><rect x="271" y="20" width="23.4" height="9" fill="#1d5db8"/><rect x="271" y="29" width="23.4" height="9.4" fill="#164a9a"/><rect x="264.4" y="17.5" width="16" height="15" rx="1" fill="#1a55a8"/><text x="272.4" y="29.5" font-family="Liberation Sans" font-weight="bold" font-size="11" fill="#fff" text-anchor="middle">W</text><rect x="333" y="11" width="23.3" height="27.4" rx="1.5" fill="#21a366"/><rect x="333" y="20" width="23.3" height="9" fill="#107c41"/><rect x="345" y="11" width="11.3" height="9" fill="#33c481"/><rect x="333" y="29" width="23.3" height="9.4" fill="#185c37"/><rect x="326.6" y="17.5" width="16" height="15" rx="1" fill="#107c41"/><text x="334.6" y="29.5" font-family="Liberation Sans" font-weight="bold" font-size="11" fill="#fff" text-anchor="middle">X</text><defs><linearGradient id="brg" x1="0" y1="0" x2="1" y2="1"><stop offset="0" stop-color="#ff6a2a"/><stop offset="1" stop-color="#e4282e"/></linearGradient><radialGradient id="ffg" cx="0.3" cy="0.7" r="0.9"><stop offset="0" stop-color="#ff3b30"/><stop offset="0.6" stop-color="#ff6d1f"/><stop offset="1" stop-color="#ffc22e"/></radialGradient><linearGradient id="edg" x1="0" y1="0" x2="1" y2="0.3"><stop offset="0" stop-color="#2f9fe0"/><stop offset="0.55" stop-color="#30c0b8"/><stop offset="1" stop-color="#62d04a"/></linearGradient></defs><path d="M396.5 10 L402 8.8 L407 10 L412.5 8.8 L416.8 14 L416 17 L417 20 L413.5 33 L404 39.5 L394.5 33 L391 20 L392 17 L391 14 Z" fill="url(#brg)"/><path d="M396 17 L399.5 13.5 L404 14.5 L408.5 13.5 L412 17 L410.5 23 L411 27 L407.5 31 L404 33.5 L400.5 31 L397 27 L397.5 23 Z" fill="#fff"/><path d="M399 19.5 L402.5 20.5 M409 19.5 L405.5 20.5 M404 21 L404 27 M401.5 27.5 L404 26 L406.5 27.5" stroke="#e8432c" stroke-width="1.3" fill="none"/><circle cx="466" cy="25" r="15" fill="#1878d0"/><path d="M451 25 A15 15 0 0 1 481 25 Q481 30 479 32 Q476 24 468 22.5 Q458 21.5 454 31 Q451 28 451 25 Z" fill="url(#edg)"/><path d="M466 40 A15 15 0 0 0 479.5 31.5 Q474 33.5 468 31.5 Q461 29 460 33 Q460 38 466 40 Z" fill="#135aaa"/><circle cx="466.5" cy="25.5" r="4.3" fill="#1e1c22"/><path d="M466 29 Q472 31.5 479 30 L478 32 Q471 34 465.5 30 Z" fill="#1e1c22"/><circle cx="527.8" cy="25.2" r="13.6" fill="url(#ffg)"/><path d="M533 11.5 Q539 14 541 21 Q542.5 30 536 35.5 Q539 28 536 21 Q534.5 16 533 11.5 Z" fill="#ffd43a"/><circle cx="527" cy="23" r="7" fill="#3d6fdc"/><path d="M520 23 Q522 30 528 30 Q533 30 534 25 Q530 28 526 26 Q522 24 520 23 Z" fill="#5a36a8"/><path d="M519 16 Q523 13 527 16 Q523 16 521 19 Z" fill="#ff9a2a"/><rect x="574.8" y="9.7" width="30.5" height="30.1" rx="2" fill="#52a51a"/><path d="M598 15 L583 15 L580 19 L580 31 L583 35 L598 35 L598 31 L585.5 31 L585.5 19 L598 19 Z" fill="#fff"/><rect x="636.6" y="9.7" width="30.6" height="30.1" rx="2" fill="#f15b2c"/><path d="M660 15 L645 15 L642 19 L642 31 L645 35 L660 35 L660 31 L647.5 31 L647.5 19 L660 19 Z" fill="#fff"/></svg>
<svg style="left:1590px;top:1030px" width="330" height="50"><path d="M22 28.5 L30 20.7 L37.8 28.5" stroke="#fff" stroke-width="1.3" fill="none"/><path d="M53.5 31 Q55 20 66 17 M57 31 Q58.5 23 66 20.5 M60.5 31 Q61.5 26 66 24" stroke="#fff" stroke-width="1.1" fill="none"/><circle cx="66.3" cy="30.5" r="1.5" fill="#fff"/><rect x="81.5" y="20.5" width="17" height="10" stroke="#fff" stroke-width="1.2" fill="none"/><rect x="83.5" y="22.5" width="9" height="6" fill="#fff"/><rect x="98.5" y="23.5" width="1.8" height="4" fill="#fff"/><path d="M110 22 L113.5 22 L118 18.5 L118 32.5 L113.5 29 L110 29 Z" stroke="#fff" stroke-width="1.1" fill="none"/><path d="M121 22.5 Q123 25.5 121 28.5 M124 20 Q127.5 25.5 124 31 M127 17.5 Q132 25.5 127 33.5" stroke="#fff" stroke-width="1.1" fill="none"/><path d="M279 15.5 L299 15.5 L299 31 L292.5 31 L290 33.5 L287.5 31 L279 31 Z" fill="#fff"/><path d="M282.5 19.5 L295.5 19.5 M282.5 22.5 L295.5 22.5 M282.5 25.5 L291 25.5" stroke="#1e1c22" stroke-width="1.1"/></svg>
<div style="position:absolute;left:1730.50px;top:1048.48px;font-size:14.2px;line-height:14.2px;color:#ffffff;font-weight:normal;white-space:nowrap;">МОН</div>
<div style="position:absolute;left:1211.50px;width:1200px;text-align:center;top:1037.20px;font-size:14.3px;line-height:14.3px;color:#ffffff;font-weight:normal;white-space:nowrap;">8:50 PM</div>
<div style="position:absolute;left:1212.50px;width:1200px;text-align:center;top:1060.40px;font-size:14.3px;line-height:14.3px;color:#ffffff;font-weight:normal;white-space:nowrap;">7/7/2020</div>
<div style="position:absolute;left:263.9px;top:942.8px;width:95.8px;height:95.6px;border-radius:50%;background:rgba(255,255,25,0.82)"></div>
<div style="position:absolute;left:263.9px;top:1030px;width:95.8px;height:9px;overflow:hidden"><div style="position:absolute;left:0;top:-87.2px;width:95.8px;height:95.6px;border-radius:50%;background:rgba(60,50,20,0.45)"></div></div>
<div style="position:absolute;left:297.6px;top:975.3px;width:29.4px;height:29.4px;border-radius:50%;background:radial-gradient(circle closest-side, rgba(255,235,60,1) 0, rgba(255,200,40,1) 3.5px, #ff8a1a 5px, #ee1c24 6.8px, #ee1c24 11.3px, #ff7a1a 12.8px, rgba(255,190,40,0.6) 14px, rgba(255,255,25,0) 14.7px)"></div>
<svg style="left:310px;top:988px" width="20" height="24"><path d="M2 1.5 L2 17.5 L5.8 14 L8.8 20.5 L11.3 19.3 L8.5 13 L13.5 13 Z" fill="#fff" stroke="#111" stroke-width="1"/></svg>
</body></html>
